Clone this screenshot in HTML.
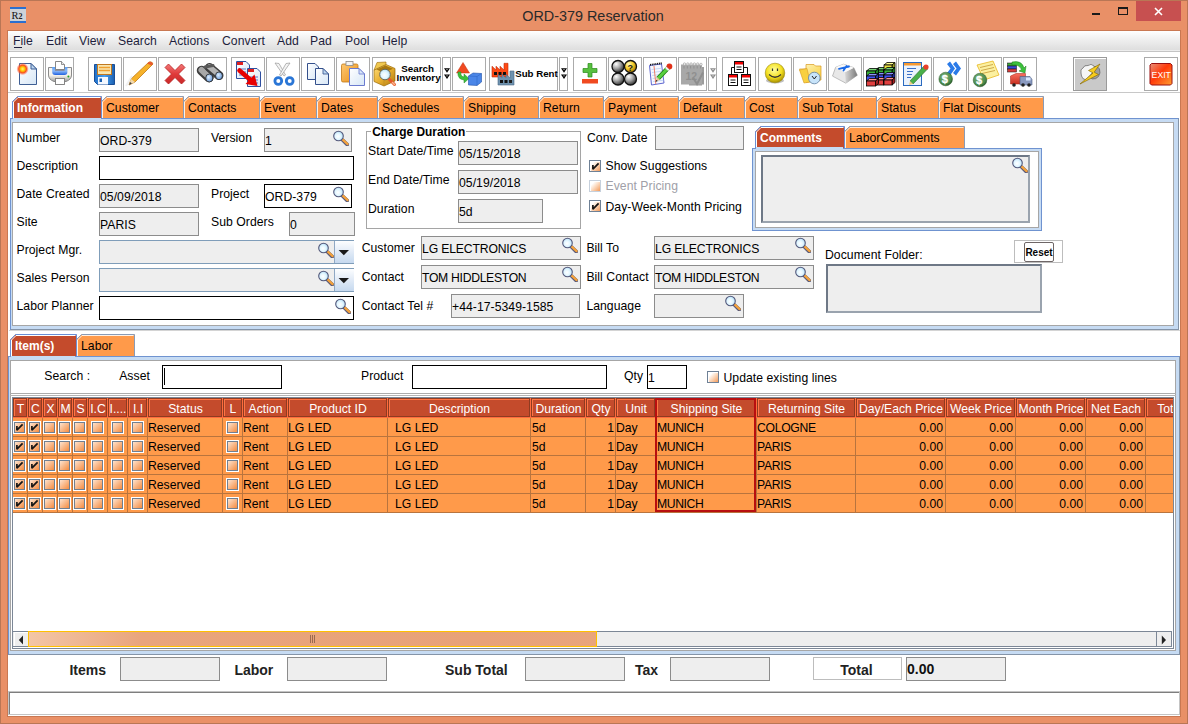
<!DOCTYPE html>
<html><head><meta charset="utf-8"><title>ORD-379 Reservation</title>
<style>
html,body{margin:0;padding:0;}
body{width:1188px;height:724px;position:relative;overflow:hidden;font-family:"Liberation Sans", sans-serif;background:#E99067}
body div, body svg{position:absolute}
.t{white-space:nowrap}
</style></head><body>
<svg width="0" height="0" style="left:0;top:0">
<defs>
<radialGradient id="lens" cx="0.45" cy="0.55" r="0.6"><stop offset="0" stop-color="#FFFFFF"/><stop offset="0.5" stop-color="#E2F6FF"/><stop offset="1" stop-color="#A8D8F4"/></radialGradient>
<symbol id="mag" viewBox="0 0 17 16">
<path d="M10.3 9.8 L15.3 14.6" stroke="#5A5A78" stroke-width="3.6" stroke-linecap="round"/>
<path d="M10.8 9.6 L15.6 14.1" stroke="#F5A23A" stroke-width="2.2" stroke-linecap="round"/>
<circle cx="6.5" cy="6" r="4.8" fill="url(#lens)" stroke="#54587A" stroke-width="1.1"/>
</symbol>
</defs></svg>
<div style="left:0;top:0;width:1188px;height:724px;background:#E99067;box-shadow:inset 0 0 0 1px #B97655"></div>
<div style="left:7px;top:30px;width:1174px;height:687px;background:#C97852"></div>
<div style="left:8px;top:31px;width:1172px;height:685px;background:#fff"></div>
<div class="t" style="left:-1.00px;top:7.97px;font-size:14.4px;line-height:16.08px;color:#2A2A2A;width:1188px;text-align:center;">ORD-379 Reservation</div>
<svg style="left:10px;top:7px" width="16" height="16" viewBox="0 0 16 16">
<rect x="0" y="0" width="16" height="16" fill="#CDD2D8"/>
<rect x="0" y="0" width="16" height="2" fill="#2A6FD0"/><rect x="0" y="14" width="16" height="2" fill="#2A6FD0"/>
<text x="1.6" y="11.8" font-family="Liberation Serif" font-size="10.5" fill="#111">R</text>
<text x="8.6" y="11.5" font-family="Liberation Serif" font-weight="bold" font-size="8" fill="#222">2</text>
</svg>
<div style="left:1136px;top:1px;width:45px;height:20px;background:#C75050"></div>
<svg style="left:1150px;top:4px" width="18" height="14" viewBox="0 0 18 14">
<path d="M5 4 L12 11 M12 4 L5 11" stroke="#fff" stroke-width="1.6"/></svg>
<div style="left:1118px;top:7px;width:10px;height:8px;box-sizing:border-box;border:1px solid #1A1A1A;border-top-width:2px"></div>
<div style="left:1092px;top:13px;width:8px;height:2px;background:#1A1A1A"></div>
<div style="left:8px;top:31px;width:1172px;height:19px;background:linear-gradient(#FFFFFF,#F4F4F4 30%,#DEDEDE)"></div>
<div style="left:8px;top:50px;width:1172px;height:1px;background:#EDEDED"></div>
<div style="left:8px;top:51px;width:1172px;height:1px;background:#C4C4C4"></div>
<div class="t" style="left:13.00px;top:35.46px;font-size:12.2px;line-height:13.63px;color:#1E1E3C;letter-spacing:0.05px;">File</div>
<div class="t" style="left:46.00px;top:35.46px;font-size:12.2px;line-height:13.63px;color:#1E1E3C;letter-spacing:0.05px;">Edit</div>
<div class="t" style="left:79.00px;top:35.46px;font-size:12.2px;line-height:13.63px;color:#1E1E3C;letter-spacing:0.05px;">View</div>
<div class="t" style="left:118.00px;top:35.46px;font-size:12.2px;line-height:13.63px;color:#1E1E3C;letter-spacing:0.05px;">Search</div>
<div class="t" style="left:169.00px;top:35.46px;font-size:12.2px;line-height:13.63px;color:#1E1E3C;letter-spacing:0.05px;">Actions</div>
<div class="t" style="left:222.00px;top:35.46px;font-size:12.2px;line-height:13.63px;color:#1E1E3C;letter-spacing:0.05px;">Convert</div>
<div class="t" style="left:277.00px;top:35.46px;font-size:12.2px;line-height:13.63px;color:#1E1E3C;letter-spacing:0.05px;">Add</div>
<div class="t" style="left:310.00px;top:35.46px;font-size:12.2px;line-height:13.63px;color:#1E1E3C;letter-spacing:0.05px;">Pad</div>
<div class="t" style="left:345.00px;top:35.46px;font-size:12.2px;line-height:13.63px;color:#1E1E3C;letter-spacing:0.05px;">Pool</div>
<div class="t" style="left:382.00px;top:35.46px;font-size:12.2px;line-height:13.63px;color:#1E1E3C;letter-spacing:0.05px;">Help</div>
<div style="left:14px;top:47px;width:8px;height:1px;background:#1E1E3C"></div>
<div style="left:10px;top:57px;width:34px;height:34px;box-sizing:border-box;border:1px solid #ABABAB;background:#fff"></div>
<div style="left:45px;top:57px;width:29px;height:34px;box-sizing:border-box;border:1px solid #ABABAB;background:#fff"></div>
<div style="left:88px;top:57px;width:34px;height:34px;box-sizing:border-box;border:1px solid #ABABAB;background:#fff"></div>
<div style="left:123px;top:57px;width:34px;height:34px;box-sizing:border-box;border:1px solid #ABABAB;background:#fff"></div>
<div style="left:158px;top:57px;width:34px;height:34px;box-sizing:border-box;border:1px solid #ABABAB;background:#fff"></div>
<div style="left:193px;top:57px;width:34px;height:34px;box-sizing:border-box;border:1px solid #ABABAB;background:#fff"></div>
<div style="left:231px;top:57px;width:34px;height:34px;box-sizing:border-box;border:1px solid #ABABAB;background:#fff"></div>
<div style="left:266px;top:57px;width:34px;height:34px;box-sizing:border-box;border:1px solid #ABABAB;background:#fff"></div>
<div style="left:301px;top:57px;width:34px;height:34px;box-sizing:border-box;border:1px solid #ABABAB;background:#fff"></div>
<div style="left:336px;top:57px;width:34px;height:34px;box-sizing:border-box;border:1px solid #ABABAB;background:#fff"></div>
<div style="left:372px;top:57px;width:69px;height:34px;box-sizing:border-box;border:1px solid #ABABAB;background:#fff"></div>
<div style="left:442px;top:57px;width:9px;height:34px;box-sizing:border-box;border:1px solid #ABABAB;background:#fff"></div>
<div style="left:452px;top:57px;width:34px;height:34px;box-sizing:border-box;border:1px solid #ABABAB;background:#fff"></div>
<div style="left:489px;top:57px;width:69px;height:34px;box-sizing:border-box;border:1px solid #ABABAB;background:#fff"></div>
<div style="left:559px;top:57px;width:9px;height:34px;box-sizing:border-box;border:1px solid #ABABAB;background:#fff"></div>
<div style="left:573px;top:57px;width:34px;height:34px;box-sizing:border-box;border:1px solid #ABABAB;background:#fff"></div>
<div style="left:608px;top:57px;width:34px;height:34px;box-sizing:border-box;border:1px solid #ABABAB;background:#fff"></div>
<div style="left:643px;top:57px;width:34px;height:34px;box-sizing:border-box;border:1px solid #ABABAB;background:#fff"></div>
<div style="left:678px;top:57px;width:29px;height:34px;box-sizing:border-box;border:1px solid #ABABAB;background:#fff"></div>
<div style="left:708px;top:57px;width:9px;height:34px;box-sizing:border-box;border:1px solid #ABABAB;background:#fff"></div>
<div style="left:722px;top:57px;width:34px;height:34px;box-sizing:border-box;border:1px solid #ABABAB;background:#fff"></div>
<div style="left:758px;top:57px;width:34px;height:34px;box-sizing:border-box;border:1px solid #ABABAB;background:#fff"></div>
<div style="left:793px;top:57px;width:34px;height:34px;box-sizing:border-box;border:1px solid #ABABAB;background:#fff"></div>
<div style="left:828px;top:57px;width:34px;height:34px;box-sizing:border-box;border:1px solid #ABABAB;background:#fff"></div>
<div style="left:863px;top:57px;width:34px;height:34px;box-sizing:border-box;border:1px solid #ABABAB;background:#fff"></div>
<div style="left:898px;top:57px;width:34px;height:34px;box-sizing:border-box;border:1px solid #ABABAB;background:#fff"></div>
<div style="left:933px;top:57px;width:34px;height:34px;box-sizing:border-box;border:1px solid #ABABAB;background:#fff"></div>
<div style="left:968px;top:57px;width:34px;height:34px;box-sizing:border-box;border:1px solid #ABABAB;background:#fff"></div>
<div style="left:1003px;top:57px;width:34px;height:34px;box-sizing:border-box;border:1px solid #ABABAB;background:#fff"></div>
<div style="left:1144px;top:57px;width:34px;height:34px;box-sizing:border-box;border:1px solid #ABABAB;background:#fff"></div>
<div style="left:1073px;top:57px;width:34px;height:34px;box-sizing:border-box;border:1px solid #9A9A9A;background:#C9C9C9;box-shadow:inset 1px 1px 0 #fff"></div>
<div style="left:8px;top:92px;width:1172px;height:1px;background:#C8C8C8"></div>

<svg style="left:0;top:0" width="1188" height="95" viewBox="0 0 1188 95">
<defs>
<linearGradient id="pg" x1="0" y1="0" x2="1" y2="1"><stop offset="0" stop-color="#FFFFFF"/><stop offset="1" stop-color="#D6E6F6"/></linearGradient>
<radialGradient id="sun" cx="0.5" cy="0.5" r="0.5"><stop offset="0" stop-color="#FFF27A"/><stop offset="0.35" stop-color="#FFC800"/><stop offset="0.62" stop-color="#F8501E"/><stop offset="1" stop-color="#FF6040" stop-opacity="0"/></radialGradient>
<linearGradient id="prn" x1="0" y1="0" x2="0" y2="1"><stop offset="0" stop-color="#F4F4F4"/><stop offset="0.55" stop-color="#F8F4EC"/><stop offset="1" stop-color="#A0A0A0"/></linearGradient>
<linearGradient id="tray" x1="0" y1="0" x2="0" y2="1"><stop offset="0" stop-color="#5AA0F8"/><stop offset="0.5" stop-color="#8AB8F8"/><stop offset="1" stop-color="#2060E0"/></linearGradient>
<linearGradient id="flop" x1="0" y1="0" x2="1" y2="0"><stop offset="0" stop-color="#1F6FC8"/><stop offset="0.5" stop-color="#4AA0F0"/><stop offset="1" stop-color="#1A5FB0"/></linearGradient>
<linearGradient id="redx" x1="0" y1="0" x2="0" y2="1"><stop offset="0" stop-color="#F27A7A"/><stop offset="0.5" stop-color="#E03A3A"/><stop offset="1" stop-color="#C82828"/></linearGradient>
<linearGradient id="binb" x1="0" y1="0" x2="0" y2="1"><stop offset="0" stop-color="#9A9A9A"/><stop offset="0.5" stop-color="#5A5A5A"/><stop offset="1" stop-color="#3A3A3A"/></linearGradient>
<radialGradient id="bl" cx="0.4" cy="0.4" r="0.6"><stop offset="0" stop-color="#E0F0FF"/><stop offset="1" stop-color="#6A9AD8"/></radialGradient>
<linearGradient id="clip" x1="0" y1="0" x2="1" y2="1"><stop offset="0" stop-color="#FFC870"/><stop offset="1" stop-color="#E8901A"/></linearGradient>
<linearGradient id="gold" x1="0" y1="0" x2="1" y2="1"><stop offset="0" stop-color="#FFE080"/><stop offset="0.5" stop-color="#E8B030"/><stop offset="1" stop-color="#B07810"/></linearGradient>
<radialGradient id="ball" cx="0.35" cy="0.3" r="0.7"><stop offset="0" stop-color="#FFFFFF"/><stop offset="0.5" stop-color="#A8A8A8"/><stop offset="1" stop-color="#3A3A3A"/></radialGradient>
<radialGradient id="yball" cx="0.35" cy="0.3" r="0.7"><stop offset="0" stop-color="#FFFBC0"/><stop offset="0.5" stop-color="#F8D030"/><stop offset="1" stop-color="#B08000"/></radialGradient>
<radialGradient id="smile" cx="0.45" cy="0.35" r="0.65"><stop offset="0" stop-color="#FFFFA0"/><stop offset="0.6" stop-color="#F4E020"/><stop offset="1" stop-color="#A89000"/></radialGradient>
<linearGradient id="fold" x1="0" y1="0" x2="1" y2="1"><stop offset="0" stop-color="#FFF8C8"/><stop offset="1" stop-color="#F8CC30"/></linearGradient>
<linearGradient id="key" x1="0" y1="0" x2="0" y2="1"><stop offset="0" stop-color="#FFFFFF"/><stop offset="0.6" stop-color="#D8D8D8"/><stop offset="1" stop-color="#8A8A8A"/></linearGradient>
<radialGradient id="coin" cx="0.4" cy="0.35" r="0.65"><stop offset="0" stop-color="#7AB07A"/><stop offset="0.8" stop-color="#4A8A4A"/><stop offset="1" stop-color="#2E5E2E"/></radialGradient>
<linearGradient id="exitg" x1="0" y1="0" x2="1" y2="1"><stop offset="0" stop-color="#E8907A"/><stop offset="0.45" stop-color="#FF3A0A"/><stop offset="1" stop-color="#FFA030"/></linearGradient>
<linearGradient id="keyr" x1="0" y1="0" x2="1" y2="0"><stop offset="0" stop-color="#D8D8D8"/><stop offset="1" stop-color="#7A7A7A"/></linearGradient>
<linearGradient id="truck" x1="0" y1="0" x2="0" y2="1"><stop offset="0" stop-color="#F87060"/><stop offset="1" stop-color="#C83020"/></linearGradient>
</defs>

<!-- 1 new doc -->
<path d="M19.5 63.5 H31 L36.5 69 V84.5 H19.5 Z" fill="url(#pg)" stroke="#3F5F94" stroke-width="1"/>
<path d="M31 63.5 V69 H36.5 Z" fill="#BCD6F0" stroke="#3F5F94" stroke-width="1"/>
<circle cx="22.6" cy="69" r="6.2" fill="url(#sun)"/>

<!-- 2 printer -->
<path d="M48.5 67.5 H71.5 V75 Q71.5 79.5 66 81.5 H54 Q48.5 79.5 48.5 75 Z" fill="url(#prn)" stroke="#7E7E7E" stroke-width="0.9"/>
<path d="M52.2 67 H67.4 V72 Q67.4 75 64.4 75 H55.2 Q52.2 75 52.2 72 Z" fill="url(#tray)"/>
<rect x="55" y="69.3" width="9.6" height="1.6" fill="#8C8C9C"/>
<path d="M55.5 61.5 H61.5 L64.5 64.5 V69.5 H55.5 Z" fill="#fff" stroke="#7A7A7A" stroke-width="0.9"/>
<path d="M61.5 61.5 V64.5 H64.5" fill="#E8E8E8" stroke="#7A7A7A" stroke-width="0.8"/>
<rect x="55.5" y="78.5" width="9" height="6" fill="#fff" stroke="#7A7A7A" stroke-width="0.9"/>
<circle cx="68.4" cy="76.4" r="1" fill="#20A020"/>

<!-- 3 floppy -->
<path d="M94.5 64.5 H114.5 V84.5 H97.5 L94.5 81.5 Z" fill="url(#flop)" stroke="#1A4E96" stroke-width="1"/>
<rect x="97.5" y="64.5" width="14" height="10" fill="#F8E6B0" stroke="#C07820" stroke-width="1"/>
<path d="M99 67.5 H110 M99 70.5 H110" stroke="#F0A030" stroke-width="1.6"/>
<rect x="98" y="77" width="10" height="7.5" fill="#F4F8FF"/>
<rect x="99.5" y="78.5" width="2.5" height="3.5" fill="#1A5FB0"/>

<!-- 4 pencil -->
<path d="M129 85 L131 79 L149 62 Q152 61 153 64 L135 82 Z" fill="#F6B22A" stroke="#C07812" stroke-width="0.8"/>
<path d="M129 85 L131 79 L135 82 Z" fill="#F0D8B0"/>
<path d="M129 85 L130 82 L132 83.5 Z" fill="#444"/>
<path d="M147 63.5 L149 62 Q152 61 153 64 L151.5 65.5 Z" fill="#E85A30"/>
<path d="M126 86 L132 76" stroke="#E8E8E8" stroke-width="2" opacity="0.6"/>

<!-- 5 red X -->
<path d="M165 67.5 L168.5 64 L175 70.5 L181.5 64 L185 67.5 L178.5 74 L185 80.5 L181.5 84 L175 77.5 L168.5 84 L165 80.5 L171.5 74 Z" fill="url(#redx)" stroke="#B82020" stroke-width="0.8"/>

<!-- 6 binoculars -->
<path d="M201.5 70.5 L209 77.5" stroke="#3E3E3E" stroke-width="9.5" stroke-linecap="round"/>
<path d="M201.5 70 L208.5 76.5" stroke="#A8A8A8" stroke-width="6" stroke-linecap="round"/>
<path d="M209.5 67.5 L219 75.5" stroke="#3E3E3E" stroke-width="9" stroke-linecap="round"/>
<path d="M209.5 67 L218.5 74.5" stroke="#B4B4B4" stroke-width="5.5" stroke-linecap="round"/>
<path d="M205 67 L213 65.5" stroke="#5A5A5A" stroke-width="3" stroke-linecap="round"/>
<ellipse cx="209.3" cy="78" rx="3.6" ry="4" fill="url(#bl)" stroke="#2E2E2E" stroke-width="0.9"/>
<ellipse cx="219" cy="75.8" rx="3.5" ry="3.9" fill="url(#bl)" stroke="#2E2E2E" stroke-width="0.9"/>

<!-- 7 copy red -->
<path d="M236.5 61.5 H246 L249.5 65 V78.5 H236.5 Z" fill="url(#pg)" stroke="#2F4F9F" stroke-width="1"/>
<rect x="237" y="62" width="6" height="3" fill="#E02020"/>
<path d="M239 69 H246 M239 72 H246 M239 75 H246" stroke="#4A6ABF" stroke-width="0.9"/>
<path d="M247.5 68.5 H257 L260.5 72 V86.5 H247.5 Z" fill="url(#pg)" stroke="#2F4F9F" stroke-width="1"/>
<rect x="248" y="69" width="6" height="3" fill="#E02020"/>
<path d="M250 77 H258 M250 80 H258 M250 83 H258" stroke="#4A6ABF" stroke-width="0.9"/>
<path d="M239.5 70.5 L250 79.5" stroke="#E80000" stroke-width="4.6" stroke-linecap="round"/>
<path d="M245.5 84 L257.5 86 L254.5 74.5 Z" fill="#E80000"/>

<!-- 8 scissors -->
<path d="M275 63 L284 76 L285.5 75 L279 63.5 Z" fill="#F4F4F4" stroke="#9A9A9A" stroke-width="0.7"/>
<path d="M290 63 L281 76 L279.5 75 L286 63.5 Z" fill="#F4F4F4" stroke="#9A9A9A" stroke-width="0.7"/>
<circle cx="278.3" cy="81" r="3.4" fill="none" stroke="#2A76D6" stroke-width="2.8"/>
<circle cx="289.7" cy="81" r="3.4" fill="none" stroke="#2A76D6" stroke-width="2.8"/>

<!-- 9 copy -->
<path d="M307.5 63.5 H315 L318.5 67 V79.5 H307.5 Z" fill="url(#pg)" stroke="#34508C" stroke-width="1"/>
<path d="M315.5 68.5 H323 L328.5 74 V84.5 H315.5 Z" fill="url(#pg)" stroke="#34508C" stroke-width="1"/>
<path d="M323 68.5 V74 H328.5 Z" fill="#BCD6F0" stroke="#34508C" stroke-width="0.8"/>

<!-- 10 paste -->
<rect x="341.5" y="64" width="16.5" height="18" rx="1.5" fill="url(#clip)" stroke="#C07818" stroke-width="0.8"/>
<rect x="346" y="61.5" width="7" height="4" fill="#F4F4F4" stroke="#8A8A8A" stroke-width="0.8"/>
<path d="M349.5 68.5 H359 L364.5 74 V85.5 H349.5 Z" fill="url(#pg)" stroke="#6A7ACF" stroke-width="1"/>
<path d="M359 68.5 V74 H364.5 Z" fill="#D8E6F8" stroke="#6A7ACF" stroke-width="0.8"/>

<!-- 11 search inventory -->
<path d="M374 70 L386 64.5 L395 68.5 L395 81 L384 86 L374 81.5 Z" fill="url(#gold)" stroke="#9A6A08" stroke-width="0.7"/>
<path d="M376.5 69.5 L385.5 65.5 L393 68.8 L384 72.8 Z" fill="#A87810"/>
<path d="M374 70 L377 62.5 L386 62 L386 64.5 Z" fill="#F0C850" stroke="#9A6A08" stroke-width="0.6"/>
<path d="M384 72.8 V86" stroke="#B88A20" stroke-width="0.6"/>
<path d="M389 79 L394.5 84.5" stroke="#E8582A" stroke-width="3" stroke-linecap="round"/>
<path d="M392.5 82.5 L394.5 84.5" stroke="#F8B890" stroke-width="1.5" stroke-linecap="round"/>
<circle cx="385" cy="74.5" r="5.3" fill="url(#lens)" stroke="#6A6A5A" stroke-width="1"/>

<!-- dropdown triangles -->
<g id="dd">
<path d="M444 68.2 H450 L447 72.8 Z" fill="#000"/><circle cx="447" cy="69.6" r="0.6" fill="#fff"/>
<path d="M444 74.4 H450 L447 79 Z" fill="#000"/><circle cx="447" cy="75.8" r="0.6" fill="#fff"/>
</g>
<use href="#dd" x="117" y="0"/>
<g opacity="0.45"><use href="#dd" x="266" y="0"/></g>

<!-- 12 shapes -->
<path d="M463 62.5 L469.5 73 H456.5 Z" fill="#F04A20" stroke="#C03010" stroke-width="0.5"/>
<path d="M458 72 Q457 79 464 80 L464 83 L469 78.5 L464 74 L464 77 Q460 76 461 72 Z" fill="#3CC03C" stroke="#2A8A2A" stroke-width="0.5"/>
<path d="M468.5 76 L473 73 L481.5 73.5 L481.5 82 L477 85.5 L468.5 85 Z" fill="#4A86E8" stroke="#2050A8" stroke-width="0.6"/>
<path d="M468.5 76 L477 76.5 L481.5 73.5 M477 76.5 V85.5" stroke="#2A60C0" stroke-width="0.5" fill="none"/>

<!-- 13 sub rent factories -->
<path d="M492 77 V66.2 L496 70 V66.2 L500 70 V66.2 L504 70 V63.3 H508 V77 Z" fill="#FF4A14" stroke="#C02A08" stroke-width="0.6"/>
<rect x="494" y="72" width="3" height="3" fill="#111"/><rect x="498.5" y="72" width="3" height="3" fill="#111"/><rect x="503" y="72" width="3" height="3" fill="#111"/>
<path d="M498 85 V74.4 L502 78 V74.4 L506 78 V74.4 L510 78 V71 H514 V85 Z" fill="#6E92AE" stroke="#4A6A86" stroke-width="0.6"/>
<rect x="500" y="80" width="3" height="3" fill="#111"/><rect x="504.5" y="80" width="3" height="3" fill="#111"/><rect x="509" y="80" width="3" height="3" fill="#222"/>

<!-- 14 plus minus -->
<path d="M588 63.5 H592 V68.5 H597 V72.5 H592 V77 H588 V72.5 H583 V68.5 H588 Z" fill="#58C040" stroke="#2A8A1A" stroke-width="0.7"/>
<rect x="582" y="79" width="16" height="4.5" fill="#F04A20"/>

<!-- 15 balls -->
<circle cx="618" cy="66.5" r="6" fill="url(#ball)" stroke="#111" stroke-width="1.3"/>
<circle cx="630.5" cy="66.5" r="6" fill="url(#yball)" stroke="#111" stroke-width="1.3"/>
<text x="627.5" y="70.5" font-family="Liberation Sans" font-weight="bold" font-size="9" fill="#222">?</text>
<circle cx="618" cy="79" r="6" fill="url(#ball)" stroke="#111" stroke-width="1.3"/>
<circle cx="630.5" cy="79" r="6" fill="url(#ball)" stroke="#111" stroke-width="1.3"/>

<!-- 16 notepad green pencil -->
<path d="M649.5 65.5 L661.5 64 L664 83 L651.5 85 Z" fill="#F6F8FF" stroke="#6068D0" stroke-width="1"/>
<path d="M651.5 69.5 L662 68.2 M652 72.5 L662.4 71.2 M652.3 75.5 L662.8 74.2 M652.7 78.5 L663.2 77.2 M653 81.5 L663.6 80.2" stroke="#B8D0F4" stroke-width="0.8"/>
<path d="M654 66 L655.8 84" stroke="#F06040" stroke-width="0.8"/>
<path d="M650 64.8 L662 63.2" stroke="#111" stroke-width="1.8" stroke-dasharray="1 0.8"/>
<path d="M658 78.5 L668.5 67.5" stroke="#1E7A10" stroke-width="4.6" stroke-linecap="butt"/>
<path d="M658 78.5 L668.5 67.5" stroke="#58D040" stroke-width="3" stroke-linecap="butt"/>
<path d="M656 81.5 L657 77 L660 80 Z" fill="#E8C890"/>
<path d="M655.5 82 L656.3 79.8 L657.8 81 Z" fill="#333"/>
<circle cx="669.4" cy="66.4" r="2.9" fill="#E03018"/>
<path d="M666.6 69.4 L667.9 68" stroke="#F0F0F0" stroke-width="4.4"/>

<!-- 17 calendar gray -->
<rect x="692" y="67" width="12" height="17.5" fill="#9C9C9C"/>
<rect x="689" y="82" width="13" height="3.5" fill="#9A9A9A"/>
<rect x="681" y="64.5" width="21" height="20" fill="#A8A8A8"/>
<g fill="#F2F2F2" stroke="#9A9A9A" stroke-width="0.6">
<circle cx="684.5" cy="64" r="1.2"/><circle cx="687.8" cy="64" r="1.2"/><circle cx="691.1" cy="64" r="1.2"/><circle cx="694.4" cy="64" r="1.2"/><circle cx="697.7" cy="64" r="1.2"/><circle cx="701" cy="64.4" r="1.2"/>
</g>
<path d="M684 66 v2.5 M687.3 66 v2.5 M690.6 66 v2.5 M693.9 66 v2.5 M697.2 66 v2.5 M700.5 66 v2.5" stroke="#8A8A8A" stroke-width="0.8"/>
<text x="685.5" y="79.5" font-family="Liberation Sans" font-weight="bold" font-size="10.5" fill="#909090">12</text>
<path d="M693 77.5 L697 84 L703 72.5" stroke="#8E8E8E" stroke-width="2" fill="none"/>

<!-- 18 org chart -->
<g stroke="#111" stroke-width="1" fill="#fff">
<path d="M731.5 74 V67.5 H747.5 V74" fill="none"/>
<rect x="734.5" y="61.5" width="9" height="11"/>
<rect x="728.5" y="74.5" width="9" height="11"/>
<rect x="741.5" y="74.5" width="9" height="11"/>
</g>
<rect x="735" y="62" width="8" height="2.5" fill="#F00000"/>
<rect x="729" y="75" width="8" height="2.5" fill="#F00000"/>
<rect x="742" y="75" width="8" height="2.5" fill="#F00000"/>
<path d="M736.5 67 H741.5 M736.5 69.5 H741.5 M730.5 80 H735.5 M730.5 82.5 H735.5 M743.5 80 H748.5 M743.5 82.5 H748.5" stroke="#111" stroke-width="1"/>

<!-- 19 smiley -->
<ellipse cx="775" cy="80.5" rx="9" ry="3" fill="#000" opacity="0.25"/>
<circle cx="775" cy="73" r="9.8" fill="url(#smile)" stroke="#9A8A10" stroke-width="0.6"/>
<path d="M772.5 68.5 v2.5 M777.5 68.5 v2.5" stroke="#333" stroke-width="1.2"/>
<path d="M769 74.5 Q775 80 781 74.5" stroke="#333" stroke-width="1.2" fill="none"/>

<!-- 20 folder clock -->
<path d="M801 72 L799.5 69 H806 L806 64.5 H814 L815.5 66 H821 V80 L806 82.5 Z" fill="url(#fold)" stroke="#D89A20" stroke-width="0.7"/>
<path d="M799.5 70 L807 68.5 L810 82 L804 83 Z" fill="#F8D040" stroke="#D89A20" stroke-width="0.6"/>
<circle cx="814.3" cy="78" r="5.8" fill="#C8E4FA" stroke="#6A8AAA" stroke-width="0.9"/>
<path d="M812 76 L814.3 79 L816.5 76" stroke="#222" stroke-width="1" fill="none"/>

<!-- 21 key -->
<path d="M835.6 67.3 L843.6 64.2 L853.8 67.7 L857.3 75.3 L845.8 83.2 L832.5 76.1 Z" fill="#E8E8E8" stroke="#9A9A9A" stroke-width="0.6"/>
<path d="M845 72.2 L853.8 67.7 L857.3 75.3 L845.8 83.2 Z" fill="url(#keyr)"/>
<path d="M835.6 67.3 L843.6 64.2 L853.8 67.7 L845 72.2 Z" fill="#FAFAFA"/>
<path d="M839 68.8 L849 66.5 M846.5 66 L843.5 70.5" stroke="#1A6AE8" stroke-width="1.8" fill="none" stroke-linecap="round"/>

<!-- 22 blocks -->
<path d="M875.5 70 L878.5 67.5 L886.5 67.5 L883.5 70 Z" fill="#7AD87A" stroke="#000" stroke-width="0.8"/><path d="M883.5 70 L886.5 67.5 L886.5 72.5 L883.5 75 Z" fill="#208020" stroke="#000" stroke-width="0.8"/><rect x="875.5" y="70" width="8" height="5" fill="#38B038" stroke="#000" stroke-width="0.8"/>
<path d="M875.5 75 L878.5 72.5 L886.5 72.5 L883.5 75 Z" fill="#8A90FF" stroke="#000" stroke-width="0.8"/><path d="M883.5 75 L886.5 72.5 L886.5 77.5 L883.5 80 Z" fill="#2030A0" stroke="#000" stroke-width="0.8"/><rect x="875.5" y="75" width="8" height="5" fill="#4050F0" stroke="#000" stroke-width="0.8"/>
<path d="M875.5 80 L878.5 77.5 L886.5 77.5 L883.5 80 Z" fill="#FF9090" stroke="#000" stroke-width="0.8"/><path d="M883.5 80 L886.5 77.5 L886.5 82.5 L883.5 85 Z" fill="#A02020" stroke="#000" stroke-width="0.8"/><rect x="875.5" y="80" width="8" height="5" fill="#E04040" stroke="#000" stroke-width="0.8"/>
<path d="M866.5 71 L869.5 68.5 L878.5 68.5 L875.5 71 Z" fill="#7AD87A" stroke="#000" stroke-width="0.8"/><path d="M875.5 71 L878.5 68.5 L878.5 73.5 L875.5 76 Z" fill="#208020" stroke="#000" stroke-width="0.8"/><rect x="866.5" y="71" width="9" height="5" fill="#38B038" stroke="#000" stroke-width="0.8"/>
<path d="M866.5 76 L869.5 73.5 L878.5 73.5 L875.5 76 Z" fill="#8A90FF" stroke="#000" stroke-width="0.8"/><path d="M875.5 76 L878.5 73.5 L878.5 78.5 L875.5 81 Z" fill="#2030A0" stroke="#000" stroke-width="0.8"/><rect x="866.5" y="76" width="9" height="5" fill="#4050F0" stroke="#000" stroke-width="0.8"/>
<path d="M866.5 81 L869.5 78.5 L878.5 78.5 L875.5 81 Z" fill="#FF9090" stroke="#000" stroke-width="0.8"/><path d="M875.5 81 L878.5 78.5 L878.5 83.5 L875.5 86 Z" fill="#A02020" stroke="#000" stroke-width="0.8"/><rect x="866.5" y="81" width="9" height="5" fill="#E04040" stroke="#000" stroke-width="0.8"/>
<path d="M884 65 L887 62.5 L895 62.5 L892 65 Z" fill="#FFFF90" stroke="#000" stroke-width="0.8"/><path d="M892 65 L895 62.5 L895 67.5 L892 70 Z" fill="#A0A020" stroke="#000" stroke-width="0.8"/><rect x="884" y="65" width="8" height="5" fill="#E8E040" stroke="#000" stroke-width="0.8"/>
<path d="M884 70 L887 67.5 L895 67.5 L892 70 Z" fill="#7AD87A" stroke="#000" stroke-width="0.8"/><path d="M892 70 L895 67.5 L895 72.5 L892 75 Z" fill="#208020" stroke="#000" stroke-width="0.8"/><rect x="884" y="70" width="8" height="5" fill="#38B038" stroke="#000" stroke-width="0.8"/>
<path d="M884 75 L887 72.5 L895 72.5 L892 75 Z" fill="#8A90FF" stroke="#000" stroke-width="0.8"/><path d="M892 75 L895 72.5 L895 77.5 L892 80 Z" fill="#2030A0" stroke="#000" stroke-width="0.8"/><rect x="884" y="75" width="8" height="5" fill="#4050F0" stroke="#000" stroke-width="0.8"/>
<path d="M884 80 L887 77.5 L895 77.5 L892 80 Z" fill="#FF9090" stroke="#000" stroke-width="0.8"/><path d="M892 80 L895 77.5 L895 82.5 L892 85 Z" fill="#A02020" stroke="#000" stroke-width="0.8"/><rect x="884" y="80" width="8" height="5" fill="#E04040" stroke="#000" stroke-width="0.8"/>

<!-- 23 notepad2 -->
<rect x="903.5" y="62.5" width="18" height="23" fill="#EAF2FC" stroke="#2A6AC0" stroke-width="1"/>
<rect x="904" y="63" width="17" height="2.5" fill="#F89A30"/>
<path d="M907 68.5 H916 M907 71.5 H913 M907 74.5 H912 M907 77.5 H911" stroke="#3A70C8" stroke-width="1"/>
<path d="M910 81 L924 66 L927.5 69 L913 84 Z" fill="#4AB04A" stroke="#2A6A2A" stroke-width="0.6"/>
<circle cx="926" cy="67" r="2.6" fill="#E8402A"/>
<path d="M910 81 L909 85 L913 84 Z" fill="#E8D080"/>

<!-- 24 dollar arrow -->
<path d="M947 64 L950 61.5 L955 68.5 L950 75.5 L947 73 L950.5 68.5 Z" fill="#2A7AE8"/>
<path d="M953 64 L956 61.5 L961 68.5 L956 75.5 L953 73 L956.5 68.5 Z" fill="#2A7AE8"/>
<circle cx="945.7" cy="79" r="6.8" fill="url(#coin)" stroke="#2A5A2A" stroke-width="0.5"/>
<text x="941.8" y="83.3" font-family="Liberation Sans" font-weight="bold" font-size="11" fill="#fff" stroke="#fff" stroke-width="0.3">$</text>

<!-- 25 dollar note -->
<path d="M977 65 L993 61 L999 75 L984 80 Z" fill="#FBF0A0" stroke="#E8B820" stroke-width="0.8"/>
<path d="M980 67.5 L993 64.5 M981 70.5 L994 67.5 M982 73.5 L995 70.5" stroke="#C8A040" stroke-width="0.9"/>
<circle cx="980" cy="80" r="6.8" fill="url(#coin)" stroke="#2A5A2A" stroke-width="0.5"/>
<text x="976.1" y="84.3" font-family="Liberation Sans" font-weight="bold" font-size="11" fill="#fff" stroke="#fff" stroke-width="0.3">$</text>

<!-- 26 truck -->
<rect x="1007.5" y="63" width="9" height="3" fill="#3CA83C" stroke="#111" stroke-width="0.5"/>
<rect x="1007.5" y="66" width="9" height="3" fill="#3A4AD8" stroke="#111" stroke-width="0.5"/>
<rect x="1007.5" y="69" width="9" height="3" fill="#D83A3A" stroke="#111" stroke-width="0.5"/>
<path d="M1012 62 Q1022 60 1024 68 L1026 66 L1025 73 L1019 71 L1021.5 69.5 Q1019 64 1012 65 Z" fill="#3CC03C" stroke="#1A7A1A" stroke-width="0.5"/>
<path d="M1010.5 76 L1016 73.5 H1025.5 V84 H1010.5 Z" fill="url(#truck)" stroke="#A02010" stroke-width="0.5"/>
<path d="M1020 76.5 H1030 L1032 79.5 V85 H1020 Z" fill="#8A9AC0" stroke="#4A5A80" stroke-width="0.6"/>
<rect x="1026" y="77.5" width="4.5" height="3" fill="#D8E8FF"/>
<circle cx="1014" cy="85" r="1.8" fill="#222"/><circle cx="1023" cy="85" r="1.8" fill="#222"/><circle cx="1029" cy="85" r="1.8" fill="#222"/>

<!-- 27 lightning -->
<path d="M1093 67.5 Q1097 65 1099.5 69 Q1101 73 1098.5 76.5 Q1096 79.5 1092 79 L1090 77 Z" fill="#9E9E9E" stroke="#555" stroke-width="0.6"/>
<path d="M1081 73 Q1080 69 1083 68 Q1084 65 1088 65.5 Q1091 63 1094 66 Q1096 68 1094 71 L1086 80 Q1082 79 1081.5 76 Z" fill="#F6F6F6" stroke="#444" stroke-width="0.6"/>
<path d="M1100 64 L1088.5 70.5 L1093 73 L1080 84 L1098.5 74.5 L1094.2 72.2 Z" fill="#F6CC1E" stroke="#7A6000" stroke-width="0.6" stroke-linejoin="round"/>

<!-- 28 exit -->
<path d="M1151.5 63.5 H1170.5 L1172 65 V83.5 L1170.5 85 H1151.5 L1150 83.5 V65 Z" fill="url(#exitg)" stroke="#9A1010" stroke-width="1"/>
<text x="1151.6" y="77.8" font-family="Liberation Sans" font-size="9.6" fill="#fff" textLength="19.3" lengthAdjust="spacingAndGlyphs">EXIT</text>
</svg>

<div class="t" style="left:401.30px;top:63.93px;font-size:9.8px;line-height:10.95px;color:#000;font-weight:bold;">Search</div>
<div class="t" style="left:396.50px;top:72.53px;font-size:9.8px;line-height:10.95px;color:#000;font-weight:bold;">Inventory</div>
<div class="t" style="left:515.20px;top:68.82px;font-size:9.7px;line-height:10.83px;color:#000;font-weight:bold;">Sub Rent</div>
<svg style="left:101px;top:96px" width="83" height="22" viewBox="0 0 83 22"><path d="M0.5 22 L0.5 5.5 L5.5 0.5 L82.5 0.5 L82.5 22" fill="#FF9A4A" stroke="#8A9BB5" stroke-width="1"/><path d="M1.5 22 L1.5 6 L6 1.5 L81.5 1.5" fill="none" stroke="#fff" stroke-width="1" opacity="0.85"/></svg>
<div class="t" style="left:106.00px;top:101.96px;font-size:12.2px;line-height:13.63px;color:#000;letter-spacing:0.05px;">Customer</div>
<svg style="left:183px;top:96px" width="77" height="22" viewBox="0 0 77 22"><path d="M0.5 22 L0.5 5.5 L5.5 0.5 L76.5 0.5 L76.5 22" fill="#FF9A4A" stroke="#8A9BB5" stroke-width="1"/><path d="M1.5 22 L1.5 6 L6 1.5 L75.5 1.5" fill="none" stroke="#fff" stroke-width="1" opacity="0.85"/></svg>
<div class="t" style="left:188.00px;top:101.96px;font-size:12.2px;line-height:13.63px;color:#000;letter-spacing:0.05px;">Contacts</div>
<svg style="left:259px;top:96px" width="58" height="22" viewBox="0 0 58 22"><path d="M0.5 22 L0.5 5.5 L5.5 0.5 L57.5 0.5 L57.5 22" fill="#FF9A4A" stroke="#8A9BB5" stroke-width="1"/><path d="M1.5 22 L1.5 6 L6 1.5 L56.5 1.5" fill="none" stroke="#fff" stroke-width="1" opacity="0.85"/></svg>
<div class="t" style="left:264.00px;top:101.96px;font-size:12.2px;line-height:13.63px;color:#000;letter-spacing:0.05px;">Event</div>
<svg style="left:316px;top:96px" width="62" height="22" viewBox="0 0 62 22"><path d="M0.5 22 L0.5 5.5 L5.5 0.5 L61.5 0.5 L61.5 22" fill="#FF9A4A" stroke="#8A9BB5" stroke-width="1"/><path d="M1.5 22 L1.5 6 L6 1.5 L60.5 1.5" fill="none" stroke="#fff" stroke-width="1" opacity="0.85"/></svg>
<div class="t" style="left:321.00px;top:101.96px;font-size:12.2px;line-height:13.63px;color:#000;letter-spacing:0.05px;">Dates</div>
<svg style="left:377px;top:96px" width="87" height="22" viewBox="0 0 87 22"><path d="M0.5 22 L0.5 5.5 L5.5 0.5 L86.5 0.5 L86.5 22" fill="#FF9A4A" stroke="#8A9BB5" stroke-width="1"/><path d="M1.5 22 L1.5 6 L6 1.5 L85.5 1.5" fill="none" stroke="#fff" stroke-width="1" opacity="0.85"/></svg>
<div class="t" style="left:382.00px;top:101.96px;font-size:12.2px;line-height:13.63px;color:#000;letter-spacing:0.05px;">Schedules</div>
<svg style="left:463px;top:96px" width="76" height="22" viewBox="0 0 76 22"><path d="M0.5 22 L0.5 5.5 L5.5 0.5 L75.5 0.5 L75.5 22" fill="#FF9A4A" stroke="#8A9BB5" stroke-width="1"/><path d="M1.5 22 L1.5 6 L6 1.5 L74.5 1.5" fill="none" stroke="#fff" stroke-width="1" opacity="0.85"/></svg>
<div class="t" style="left:468.00px;top:101.96px;font-size:12.2px;line-height:13.63px;color:#000;letter-spacing:0.05px;">Shipping</div>
<svg style="left:538px;top:96px" width="66" height="22" viewBox="0 0 66 22"><path d="M0.5 22 L0.5 5.5 L5.5 0.5 L65.5 0.5 L65.5 22" fill="#FF9A4A" stroke="#8A9BB5" stroke-width="1"/><path d="M1.5 22 L1.5 6 L6 1.5 L64.5 1.5" fill="none" stroke="#fff" stroke-width="1" opacity="0.85"/></svg>
<div class="t" style="left:543.00px;top:101.96px;font-size:12.2px;line-height:13.63px;color:#000;letter-spacing:0.05px;">Return</div>
<svg style="left:603px;top:96px" width="76" height="22" viewBox="0 0 76 22"><path d="M0.5 22 L0.5 5.5 L5.5 0.5 L75.5 0.5 L75.5 22" fill="#FF9A4A" stroke="#8A9BB5" stroke-width="1"/><path d="M1.5 22 L1.5 6 L6 1.5 L74.5 1.5" fill="none" stroke="#fff" stroke-width="1" opacity="0.85"/></svg>
<div class="t" style="left:608.00px;top:101.96px;font-size:12.2px;line-height:13.63px;color:#000;letter-spacing:0.05px;">Payment</div>
<svg style="left:678px;top:96px" width="67" height="22" viewBox="0 0 67 22"><path d="M0.5 22 L0.5 5.5 L5.5 0.5 L66.5 0.5 L66.5 22" fill="#FF9A4A" stroke="#8A9BB5" stroke-width="1"/><path d="M1.5 22 L1.5 6 L6 1.5 L65.5 1.5" fill="none" stroke="#fff" stroke-width="1" opacity="0.85"/></svg>
<div class="t" style="left:683.00px;top:101.96px;font-size:12.2px;line-height:13.63px;color:#000;letter-spacing:0.05px;">Default</div>
<svg style="left:744px;top:96px" width="54" height="22" viewBox="0 0 54 22"><path d="M0.5 22 L0.5 5.5 L5.5 0.5 L53.5 0.5 L53.5 22" fill="#FF9A4A" stroke="#8A9BB5" stroke-width="1"/><path d="M1.5 22 L1.5 6 L6 1.5 L52.5 1.5" fill="none" stroke="#fff" stroke-width="1" opacity="0.85"/></svg>
<div class="t" style="left:749.00px;top:101.96px;font-size:12.2px;line-height:13.63px;color:#000;letter-spacing:0.05px;">Cost</div>
<svg style="left:797px;top:96px" width="80" height="22" viewBox="0 0 80 22"><path d="M0.5 22 L0.5 5.5 L5.5 0.5 L79.5 0.5 L79.5 22" fill="#FF9A4A" stroke="#8A9BB5" stroke-width="1"/><path d="M1.5 22 L1.5 6 L6 1.5 L78.5 1.5" fill="none" stroke="#fff" stroke-width="1" opacity="0.85"/></svg>
<div class="t" style="left:802.00px;top:101.96px;font-size:12.2px;line-height:13.63px;color:#000;letter-spacing:0.05px;">Sub Total</div>
<svg style="left:876px;top:96px" width="63" height="22" viewBox="0 0 63 22"><path d="M0.5 22 L0.5 5.5 L5.5 0.5 L62.5 0.5 L62.5 22" fill="#FF9A4A" stroke="#8A9BB5" stroke-width="1"/><path d="M1.5 22 L1.5 6 L6 1.5 L61.5 1.5" fill="none" stroke="#fff" stroke-width="1" opacity="0.85"/></svg>
<div class="t" style="left:881.00px;top:101.96px;font-size:12.2px;line-height:13.63px;color:#000;letter-spacing:0.05px;">Status</div>
<svg style="left:938px;top:96px" width="106" height="22" viewBox="0 0 106 22"><path d="M0.5 22 L0.5 5.5 L5.5 0.5 L105.5 0.5 L105.5 22" fill="#FF9A4A" stroke="#8A9BB5" stroke-width="1"/><path d="M1.5 22 L1.5 6 L6 1.5 L104.5 1.5" fill="none" stroke="#fff" stroke-width="1" opacity="0.85"/></svg>
<div class="t" style="left:943.00px;top:101.96px;font-size:12.2px;line-height:13.63px;color:#000;letter-spacing:0.05px;">Flat Discounts</div>
<svg style="left:12px;top:96px" width="90" height="22" viewBox="0 0 90 22"><path d="M0.5 22 L0.5 5.5 L5.5 0.5 L89.5 0.5 L89.5 22" fill="#C44B2C" stroke="#6A8FD4" stroke-width="1"/><path d="M1.5 22 L1.5 6 L6 1.5 L88.5 1.5" fill="none" stroke="#fff" stroke-width="1"/></svg>
<div class="t" style="left:17.00px;top:102.14px;font-size:12px;line-height:13.40px;color:#fff;font-weight:bold;">Information</div>
<div style="left:10px;top:118px;width:1169px;height:212px;box-sizing:border-box;border:1px solid #6F93D0;border-right-color:#8494A8;border-bottom-color:#8494A8;background:#C6DBF3"></div>
<div style="left:12px;top:122px;width:1162px;height:204px;box-sizing:border-box;border:1px solid #A6A6A6;background:#fff"></div>
<div style="left:9px;top:330px;width:1171px;height:1px;background:#D4D4D4"></div>
<div style="left:13px;top:118px;width:88px;height:4px;background:#C6DBF3"></div>
<div class="t" style="left:16.50px;top:131.96px;font-size:12.2px;line-height:13.63px;color:#000;letter-spacing:0.05px;">Number</div>
<div style="left:99px;top:128px;width:100px;height:24px;box-sizing:border-box;border:1px solid #8C8C8C;background:#EEEEEE;"></div>
<div class="t" style="left:100.00px;top:134.96px;font-size:12.2px;line-height:13.63px;color:#000;letter-spacing:0.05px;">ORD-379</div>
<div class="t" style="left:211.00px;top:131.96px;font-size:12.2px;line-height:13.63px;color:#000;letter-spacing:0.05px;">Version</div>
<div style="left:264px;top:128px;width:88px;height:24px;box-sizing:border-box;border:1px solid #8C8C8C;background:#EEEEEE;"></div>
<div class="t" style="left:265.00px;top:134.96px;font-size:12.2px;line-height:13.63px;color:#000;letter-spacing:0.05px;">1</div>
<svg style="left:332px;top:130px" width="17" height="16" viewBox="0 0 17 16"><use href="#mag"/></svg>
<div class="t" style="left:16.50px;top:159.96px;font-size:12.2px;line-height:13.63px;color:#000;letter-spacing:0.05px;">Description</div>
<div style="left:99px;top:156px;width:255px;height:24px;box-sizing:border-box;border:1px solid #000;background:#fff;"></div>
<div class="t" style="left:16.50px;top:187.96px;font-size:12.2px;line-height:13.63px;color:#000;letter-spacing:0.05px;">Date Created</div>
<div style="left:99px;top:184px;width:100px;height:24px;box-sizing:border-box;border:1px solid #8C8C8C;background:#EEEEEE;"></div>
<div class="t" style="left:100.00px;top:190.96px;font-size:12.2px;line-height:13.63px;color:#000;letter-spacing:0.05px;">05/09/2018</div>
<div class="t" style="left:211.00px;top:187.96px;font-size:12.2px;line-height:13.63px;color:#000;letter-spacing:0.05px;">Project</div>
<div style="left:264px;top:184px;width:88px;height:24px;box-sizing:border-box;border:1px solid #000;background:#fff;"></div>
<div class="t" style="left:265.00px;top:190.96px;font-size:12.2px;line-height:13.63px;color:#000;letter-spacing:0.05px;">ORD-379</div>
<svg style="left:332px;top:186px" width="17" height="16" viewBox="0 0 17 16"><use href="#mag"/></svg>
<div class="t" style="left:16.50px;top:215.96px;font-size:12.2px;line-height:13.63px;color:#000;letter-spacing:0.05px;">Site</div>
<div style="left:99px;top:212px;width:100px;height:24px;box-sizing:border-box;border:1px solid #8C8C8C;background:#EEEEEE;"></div>
<div class="t" style="left:100.00px;top:218.96px;font-size:12.2px;line-height:13.63px;color:#000;letter-spacing:0.05px;">PARIS</div>
<div class="t" style="left:211.00px;top:215.96px;font-size:12.2px;line-height:13.63px;color:#000;letter-spacing:0.05px;">Sub Orders</div>
<div style="left:289px;top:212px;width:66px;height:24px;box-sizing:border-box;border:1px solid #8C8C8C;background:#EEEEEE;"></div>
<div class="t" style="left:290.00px;top:218.96px;font-size:12.2px;line-height:13.63px;color:#000;letter-spacing:0.05px;">0</div>
<div class="t" style="left:16.50px;top:243.96px;font-size:12.2px;line-height:13.63px;color:#000;letter-spacing:0.05px;">Project Mgr.</div>
<div style="left:99px;top:240px;width:255px;height:24px;box-sizing:border-box;border:1px solid #7F9DB9;background:#EEEEEE;"></div>
<div class="t" style="left:16.50px;top:271.96px;font-size:12.2px;line-height:13.63px;color:#000;letter-spacing:0.05px;">Sales Person</div>
<div style="left:99px;top:268px;width:255px;height:24px;box-sizing:border-box;border:1px solid #7F9DB9;background:#EEEEEE;"></div>
<svg style="left:317px;top:242px" width="17" height="16" viewBox="0 0 17 16"><use href="#mag"/></svg>
<div style="left:334px;top:241px;width:19px;height:22px;background:linear-gradient(#FDFEFF,#E6EEF8 40%,#C6D9EF);border-left:1px solid #8FA8C4"></div>
<svg style="left:338px;top:250px" width="12" height="6" viewBox="0 0 12 6"><path d="M0.6 0 H11 L5.8 5.2 Z" fill="#1A1A1A"/></svg>
<svg style="left:317px;top:270px" width="17" height="16" viewBox="0 0 17 16"><use href="#mag"/></svg>
<div style="left:334px;top:269px;width:19px;height:22px;background:linear-gradient(#FDFEFF,#E6EEF8 40%,#C6D9EF);border-left:1px solid #8FA8C4"></div>
<svg style="left:338px;top:278px" width="12" height="6" viewBox="0 0 12 6"><path d="M0.6 0 H11 L5.8 5.2 Z" fill="#1A1A1A"/></svg>
<div class="t" style="left:16.50px;top:299.96px;font-size:12.2px;line-height:13.63px;color:#000;letter-spacing:0.05px;">Labor Planner</div>
<div style="left:99px;top:296px;width:255px;height:24px;box-sizing:border-box;border:1px solid #000;background:#fff;"></div>
<svg style="left:334px;top:298px" width="17" height="16" viewBox="0 0 17 16"><use href="#mag"/></svg>
<div style="left:366px;top:131px;width:215px;height:98px;box-sizing:border-box;border:1px solid #A5A5A5"></div>
<div style="left:371px;top:125px;width:95px;height:12px;background:#fff"></div>
<div class="t" style="left:372.20px;top:126.23px;font-size:11.9px;line-height:13.29px;color:#000;font-weight:bold;">Charge Duration</div>
<div class="t" style="left:368.00px;top:144.96px;font-size:12.2px;line-height:13.63px;color:#000;letter-spacing:0.05px;">Start Date/Time</div>
<div style="left:458px;top:141px;width:120px;height:24px;box-sizing:border-box;border:1px solid #8C8C8C;background:#EEEEEE;"></div>
<div class="t" style="left:459.00px;top:147.96px;font-size:12.2px;line-height:13.63px;color:#000;letter-spacing:0.05px;">05/15/2018</div>
<div class="t" style="left:368.00px;top:173.96px;font-size:12.2px;line-height:13.63px;color:#000;letter-spacing:0.05px;">End Date/Time</div>
<div style="left:458px;top:170px;width:120px;height:24px;box-sizing:border-box;border:1px solid #8C8C8C;background:#EEEEEE;"></div>
<div class="t" style="left:459.00px;top:176.96px;font-size:12.2px;line-height:13.63px;color:#000;letter-spacing:0.05px;">05/19/2018</div>
<div class="t" style="left:368.00px;top:202.96px;font-size:12.2px;line-height:13.63px;color:#000;letter-spacing:0.05px;">Duration</div>
<div style="left:458px;top:199px;width:85px;height:24px;box-sizing:border-box;border:1px solid #8C8C8C;background:#EEEEEE;"></div>
<div class="t" style="left:459.00px;top:205.96px;font-size:12.2px;line-height:13.63px;color:#000;letter-spacing:0.05px;">5d</div>
<div class="t" style="left:587.00px;top:131.96px;font-size:12.2px;line-height:13.63px;color:#000;letter-spacing:0.05px;">Conv. Date</div>
<div style="left:655px;top:126px;width:89px;height:24px;box-sizing:border-box;border:1px solid #8C8C8C;background:#EEEEEE;"></div>
<div style="left:589px;top:160px;width:12px;height:12px;box-sizing:border-box;border:1px solid #6F8196;background:linear-gradient(135deg,#FFFFFF 25%,#FBD9BE 55%,#F39A5A);box-shadow:inset 1px 1px 0 #fff"></div>
<svg style="left:589px;top:160px" width="13" height="13" viewBox="0 0 13 13"><path d="M3.9 5 V9.2 L9.6 3.3" fill="none" stroke="#151515" stroke-width="1.7" stroke-linejoin="bevel"/></svg>
<div class="t" style="left:605.50px;top:159.96px;font-size:12.2px;line-height:13.63px;color:#000;letter-spacing:0.05px;">Show Suggestions</div>
<div style="left:589px;top:180px;width:12px;height:12px;box-sizing:border-box;border:1px solid #C6D0DC;background:linear-gradient(135deg,#FFFFFF 25%,#FBD9BE 55%,#F39A5A);box-shadow:inset 1px 1px 0 #fff"></div>
<div class="t" style="left:605.50px;top:179.96px;font-size:12.2px;line-height:13.63px;color:#A0A0A8;letter-spacing:0.05px;">Event Pricing</div>
<div style="left:589px;top:200px;width:12px;height:12px;box-sizing:border-box;border:1px solid #6F8196;background:linear-gradient(135deg,#FFFFFF 25%,#FBD9BE 55%,#F39A5A);box-shadow:inset 1px 1px 0 #fff"></div>
<svg style="left:589px;top:200px" width="13" height="13" viewBox="0 0 13 13"><path d="M3.9 5 V9.2 L9.6 3.3" fill="none" stroke="#151515" stroke-width="1.7" stroke-linejoin="bevel"/></svg>
<div class="t" style="left:605.50px;top:200.96px;font-size:12.2px;line-height:13.63px;color:#000;letter-spacing:0.05px;">Day-Week-Month Pricing</div>
<div style="left:752px;top:148px;width:290px;height:83px;box-sizing:border-box;border:1px solid #6F93D0;background:#C6DBF3"></div>
<div style="left:755px;top:151px;width:284px;height:77px;box-sizing:border-box;border:1px solid #A6A6A6;background:#fff"></div>
<svg style="left:844px;top:126px" width="121" height="22" viewBox="0 0 121 22"><path d="M0.5 22 L0.5 5.5 L5.5 0.5 L120.5 0.5 L120.5 22" fill="#FF9A4A" stroke="#8A9BB5" stroke-width="1"/><path d="M1.5 22 L1.5 6 L6 1.5 L119.5 1.5" fill="none" stroke="#fff" stroke-width="1" opacity="0.85"/></svg>
<div class="t" style="left:849.00px;top:131.96px;font-size:12.2px;line-height:13.63px;color:#000;letter-spacing:0.05px;">LaborComments</div>
<svg style="left:755px;top:126px" width="90" height="22" viewBox="0 0 90 22"><path d="M0.5 22 L0.5 5.5 L5.5 0.5 L89.5 0.5 L89.5 22" fill="#C44B2C" stroke="#6A8FD4" stroke-width="1"/><path d="M1.5 22 L1.5 6 L6 1.5 L88.5 1.5" fill="none" stroke="#fff" stroke-width="1"/></svg>
<div class="t" style="left:760.00px;top:132.14px;font-size:12px;line-height:13.40px;color:#fff;font-weight:bold;">Comments</div>
<div style="left:756px;top:147px;width:87px;height:2px;background:#C6DBF3"></div>
<div style="left:761px;top:155px;width:269px;height:68px;box-sizing:border-box;border:2px solid #6E7886;border-right-color:#9AA3AE;border-bottom-color:#9AA3AE;background:#EEEEEE"></div>
<svg style="left:1011px;top:157px" width="17" height="16" viewBox="0 0 17 16"><use href="#mag"/></svg>
<div class="t" style="left:361.70px;top:241.96px;font-size:12.2px;line-height:13.63px;color:#000;letter-spacing:0.05px;">Customer</div>
<div style="left:421px;top:236px;width:160px;height:24px;box-sizing:border-box;border:1px solid #8C8C8C;background:#EEEEEE;"></div>
<div class="t" style="left:422.00px;top:242.96px;font-size:12.2px;line-height:13.63px;color:#000;letter-spacing:-0.15px;">LG ELECTRONICS</div>
<svg style="left:561px;top:237px" width="17" height="16" viewBox="0 0 17 16"><use href="#mag"/></svg>
<div class="t" style="left:361.70px;top:270.96px;font-size:12.2px;line-height:13.63px;color:#000;letter-spacing:0.05px;">Contact</div>
<div style="left:421px;top:265px;width:160px;height:24px;box-sizing:border-box;border:1px solid #8C8C8C;background:#EEEEEE;"></div>
<div class="t" style="left:422.00px;top:271.96px;font-size:12.2px;line-height:13.63px;color:#000;letter-spacing:-0.3px;">TOM HIDDLESTON</div>
<svg style="left:561px;top:266px" width="17" height="16" viewBox="0 0 17 16"><use href="#mag"/></svg>
<div class="t" style="left:361.70px;top:299.96px;font-size:12.2px;line-height:13.63px;color:#000;letter-spacing:0.05px;">Contact Tel #</div>
<div style="left:451px;top:294px;width:129px;height:24px;box-sizing:border-box;border:1px solid #8C8C8C;background:#EEEEEE;"></div>
<div class="t" style="left:452.00px;top:300.96px;font-size:12.2px;line-height:13.63px;color:#000;letter-spacing:0.05px;">+44-17-5349-1585</div>
<div class="t" style="left:586.40px;top:241.96px;font-size:12.2px;line-height:13.63px;color:#000;letter-spacing:0.05px;">Bill To</div>
<div style="left:654px;top:236px;width:160px;height:24px;box-sizing:border-box;border:1px solid #8C8C8C;background:#EEEEEE;"></div>
<div class="t" style="left:655.00px;top:242.96px;font-size:12.2px;line-height:13.63px;color:#000;letter-spacing:-0.15px;">LG ELECTRONICS</div>
<svg style="left:794px;top:237px" width="17" height="16" viewBox="0 0 17 16"><use href="#mag"/></svg>
<div class="t" style="left:586.40px;top:270.96px;font-size:12.2px;line-height:13.63px;color:#000;letter-spacing:0.05px;">Bill Contact</div>
<div style="left:654px;top:265px;width:160px;height:24px;box-sizing:border-box;border:1px solid #8C8C8C;background:#EEEEEE;"></div>
<div class="t" style="left:655.00px;top:271.96px;font-size:12.2px;line-height:13.63px;color:#000;letter-spacing:-0.3px;">TOM HIDDLESTON</div>
<svg style="left:794px;top:266px" width="17" height="16" viewBox="0 0 17 16"><use href="#mag"/></svg>
<div class="t" style="left:586.40px;top:299.96px;font-size:12.2px;line-height:13.63px;color:#000;letter-spacing:0.05px;">Language</div>
<div style="left:654px;top:294px;width:90px;height:24px;box-sizing:border-box;border:1px solid #8C8C8C;background:#EEEEEE;"></div>
<svg style="left:724px;top:295px" width="17" height="16" viewBox="0 0 17 16"><use href="#mag"/></svg>
<div class="t" style="left:825.00px;top:248.96px;font-size:12.2px;line-height:13.63px;color:#000;letter-spacing:0.05px;">Document Folder:</div>
<div style="left:826px;top:264px;width:216px;height:49px;box-sizing:border-box;border:2px solid #6E7886;border-right-color:#9AA3AE;border-bottom-color:#9AA3AE;background:#EEEEEE"></div>
<div style="left:1014px;top:240px;width:49px;height:23px;box-sizing:border-box;border:1px solid #BDBDBD;background:#fff"></div>
<div style="left:1024px;top:242px;width:30px;height:20px;box-sizing:border-box;border:1px solid #6E6666;border-radius:2px;background:#fff"></div>
<div class="t" style="left:1024.00px;top:247.25px;font-size:10px;line-height:11.17px;color:#050505;font-weight:bold;width:30px;text-align:center;">Reset</div>
<div style="left:8px;top:356px;width:1172px;height:299px;box-sizing:border-box;border:1px solid #6F93D0;border-right-color:#8494A8;border-bottom-color:#8494A8;background:#C6DBF3"></div>
<div style="left:10px;top:360px;width:1166px;height:291px;box-sizing:border-box;border:1px solid #A6A6A6;background:#fff"></div>
<svg style="left:76px;top:334px" width="59" height="22" viewBox="0 0 59 22"><path d="M0.5 22 L0.5 5.5 L5.5 0.5 L58.5 0.5 L58.5 22" fill="#FF9A4A" stroke="#8A9BB5" stroke-width="1"/><path d="M1.5 22 L1.5 6 L6 1.5 L57.5 1.5" fill="none" stroke="#fff" stroke-width="1" opacity="0.85"/></svg>
<div class="t" style="left:81.00px;top:339.96px;font-size:12.2px;line-height:13.63px;color:#000;letter-spacing:0.05px;">Labor</div>
<svg style="left:10px;top:334px" width="67" height="22" viewBox="0 0 67 22"><path d="M0.5 22 L0.5 5.5 L5.5 0.5 L66.5 0.5 L66.5 22" fill="#C44B2C" stroke="#6A8FD4" stroke-width="1"/><path d="M1.5 22 L1.5 6 L6 1.5 L65.5 1.5" fill="none" stroke="#fff" stroke-width="1"/></svg>
<div class="t" style="left:15.00px;top:340.14px;font-size:12px;line-height:13.40px;color:#fff;font-weight:bold;">Item(s)</div>
<div style="left:11px;top:356px;width:64px;height:3px;background:#C6DBF3"></div>
<div class="t" style="left:44.30px;top:369.96px;font-size:12.2px;line-height:13.63px;color:#000;letter-spacing:0.05px;">Search :</div>
<div class="t" style="left:119.20px;top:369.96px;font-size:12.2px;line-height:13.63px;color:#000;letter-spacing:0.05px;">Asset</div>
<div style="left:162px;top:365px;width:120px;height:24px;box-sizing:border-box;border:1px solid #000;background:#fff;"></div>
<div style="left:164px;top:368px;width:1px;height:17px;background:#000"></div>
<div class="t" style="left:361.00px;top:369.96px;font-size:12.2px;line-height:13.63px;color:#000;letter-spacing:0.05px;">Product</div>
<div style="left:412px;top:365px;width:195px;height:24px;box-sizing:border-box;border:1px solid #000;background:#fff;"></div>
<div class="t" style="left:624.00px;top:369.96px;font-size:12.2px;line-height:13.63px;color:#000;letter-spacing:0.05px;">Qty</div>
<div style="left:647px;top:365px;width:40px;height:24px;box-sizing:border-box;border:1px solid #000;background:#fff;"></div>
<div class="t" style="left:648.00px;top:371.96px;font-size:12.2px;line-height:13.63px;color:#000;letter-spacing:0.05px;">1</div>
<div style="left:707px;top:371px;width:12px;height:12px;box-sizing:border-box;border:1px solid #6F8196;background:linear-gradient(135deg,#FFFFFF 25%,#FBD9BE 55%,#F39A5A);box-shadow:inset 1px 1px 0 #fff"></div>
<div class="t" style="left:723.50px;top:371.96px;font-size:12.2px;line-height:13.63px;color:#000;letter-spacing:0.05px;">Update existing lines</div>
<div style="left:10px;top:393px;width:1166px;height:1px;background:#ABABAB"></div>
<div style="left:10px;top:395px;width:1166px;height:1px;background:#B4B4B4"></div>
<div style="left:12px;top:397px;width:1162px;height:252px;box-sizing:border-box;border:1px solid #7C8796;background:#fff"></div>
<div style="left:13px;top:398px;width:1160px;height:233px;overflow:hidden">
<div style="left:0;top:0;width:1203px;height:20px;background:#FF6B3D"></div>
<div style="left:0px;top:0;width:14px;height:19px;box-sizing:border-box;border:1px solid #8E3B21;background:#C44B2C;box-shadow:inset 1px 1px 0 #FF7545"></div>
<div class="t" style="left:0px;top:5.19px;width:15px;text-align:center;font-size:12.2px;line-height:13.96px;color:#fff;white-space:nowrap;overflow:hidden">T</div>
<div style="left:15px;top:0;width:14px;height:19px;box-sizing:border-box;border:1px solid #8E3B21;background:#C44B2C;box-shadow:inset 1px 1px 0 #FF7545"></div>
<div class="t" style="left:15px;top:5.19px;width:15px;text-align:center;font-size:12.2px;line-height:13.96px;color:#fff;white-space:nowrap;overflow:hidden">C</div>
<div style="left:30px;top:0;width:14px;height:19px;box-sizing:border-box;border:1px solid #8E3B21;background:#C44B2C;box-shadow:inset 1px 1px 0 #FF7545"></div>
<div class="t" style="left:30px;top:5.19px;width:15px;text-align:center;font-size:12.2px;line-height:13.96px;color:#fff;white-space:nowrap;overflow:hidden">X</div>
<div style="left:45px;top:0;width:14px;height:19px;box-sizing:border-box;border:1px solid #8E3B21;background:#C44B2C;box-shadow:inset 1px 1px 0 #FF7545"></div>
<div class="t" style="left:45px;top:5.19px;width:15px;text-align:center;font-size:12.2px;line-height:13.96px;color:#fff;white-space:nowrap;overflow:hidden">M</div>
<div style="left:60px;top:0;width:14px;height:19px;box-sizing:border-box;border:1px solid #8E3B21;background:#C44B2C;box-shadow:inset 1px 1px 0 #FF7545"></div>
<div class="t" style="left:60px;top:5.19px;width:15px;text-align:center;font-size:12.2px;line-height:13.96px;color:#fff;white-space:nowrap;overflow:hidden">S</div>
<div style="left:75px;top:0;width:19px;height:19px;box-sizing:border-box;border:1px solid #8E3B21;background:#C44B2C;box-shadow:inset 1px 1px 0 #FF7545"></div>
<div class="t" style="left:75px;top:5.19px;width:20px;text-align:center;font-size:12.2px;line-height:13.96px;color:#fff;white-space:nowrap;overflow:hidden">I.C</div>
<div style="left:95px;top:0;width:19px;height:19px;box-sizing:border-box;border:1px solid #8E3B21;background:#C44B2C;box-shadow:inset 1px 1px 0 #FF7545"></div>
<div class="t" style="left:95px;top:5.19px;width:20px;text-align:center;font-size:12.2px;line-height:13.96px;color:#fff;white-space:nowrap;overflow:hidden">I....</div>
<div style="left:115px;top:0;width:19px;height:19px;box-sizing:border-box;border:1px solid #8E3B21;background:#C44B2C;box-shadow:inset 1px 1px 0 #FF7545"></div>
<div class="t" style="left:115px;top:5.19px;width:20px;text-align:center;font-size:12.2px;line-height:13.96px;color:#fff;white-space:nowrap;overflow:hidden">I.I</div>
<div style="left:135px;top:0;width:74px;height:19px;box-sizing:border-box;border:1px solid #8E3B21;background:#C44B2C;box-shadow:inset 1px 1px 0 #FF7545"></div>
<div class="t" style="left:135px;top:5.19px;width:75px;text-align:center;font-size:12.2px;line-height:13.96px;color:#fff;white-space:nowrap;overflow:hidden">Status</div>
<div style="left:210px;top:0;width:19px;height:19px;box-sizing:border-box;border:1px solid #8E3B21;background:#C44B2C;box-shadow:inset 1px 1px 0 #FF7545"></div>
<div class="t" style="left:210px;top:5.19px;width:20px;text-align:center;font-size:12.2px;line-height:13.96px;color:#fff;white-space:nowrap;overflow:hidden">L</div>
<div style="left:230px;top:0;width:44px;height:19px;box-sizing:border-box;border:1px solid #8E3B21;background:#C44B2C;box-shadow:inset 1px 1px 0 #FF7545"></div>
<div class="t" style="left:230px;top:5.19px;width:45px;text-align:center;font-size:12.2px;line-height:13.96px;color:#fff;white-space:nowrap;overflow:hidden">Action</div>
<div style="left:275px;top:0;width:99px;height:19px;box-sizing:border-box;border:1px solid #8E3B21;background:#C44B2C;box-shadow:inset 1px 1px 0 #FF7545"></div>
<div class="t" style="left:275px;top:5.19px;width:100px;text-align:center;font-size:12.2px;line-height:13.96px;color:#fff;white-space:nowrap;overflow:hidden">Product ID</div>
<div style="left:375px;top:0;width:142px;height:19px;box-sizing:border-box;border:1px solid #8E3B21;background:#C44B2C;box-shadow:inset 1px 1px 0 #FF7545"></div>
<div class="t" style="left:375px;top:5.19px;width:143px;text-align:center;font-size:12.2px;line-height:13.96px;color:#fff;white-space:nowrap;overflow:hidden">Description</div>
<div style="left:518px;top:0;width:54px;height:19px;box-sizing:border-box;border:1px solid #8E3B21;background:#C44B2C;box-shadow:inset 1px 1px 0 #FF7545"></div>
<div class="t" style="left:518px;top:5.19px;width:55px;text-align:center;font-size:12.2px;line-height:13.96px;color:#fff;white-space:nowrap;overflow:hidden">Duration</div>
<div style="left:573px;top:0;width:29px;height:19px;box-sizing:border-box;border:1px solid #8E3B21;background:#C44B2C;box-shadow:inset 1px 1px 0 #FF7545"></div>
<div class="t" style="left:573px;top:5.19px;width:30px;text-align:center;font-size:12.2px;line-height:13.96px;color:#fff;white-space:nowrap;overflow:hidden">Qty</div>
<div style="left:603px;top:0;width:39px;height:19px;box-sizing:border-box;border:1px solid #8E3B21;background:#C44B2C;box-shadow:inset 1px 1px 0 #FF7545"></div>
<div class="t" style="left:603px;top:5.19px;width:40px;text-align:center;font-size:12.2px;line-height:13.96px;color:#fff;white-space:nowrap;overflow:hidden">Unit</div>
<div style="left:643px;top:0;width:100px;height:19px;box-sizing:border-box;border:1px solid #8E3B21;background:#C44B2C;box-shadow:inset 1px 1px 0 #FF7545"></div>
<div class="t" style="left:643px;top:5.19px;width:101px;text-align:center;font-size:12.2px;line-height:13.96px;color:#fff;white-space:nowrap;overflow:hidden">Shipping Site</div>
<div style="left:744px;top:0;width:98px;height:19px;box-sizing:border-box;border:1px solid #8E3B21;background:#C44B2C;box-shadow:inset 1px 1px 0 #FF7545"></div>
<div class="t" style="left:744px;top:5.19px;width:99px;text-align:center;font-size:12.2px;line-height:13.96px;color:#fff;white-space:nowrap;overflow:hidden">Returning Site</div>
<div style="left:843px;top:0;width:89px;height:19px;box-sizing:border-box;border:1px solid #8E3B21;background:#C44B2C;box-shadow:inset 1px 1px 0 #FF7545"></div>
<div class="t" style="left:843px;top:5.19px;width:90px;text-align:center;font-size:12.2px;line-height:13.96px;color:#fff;white-space:nowrap;overflow:hidden">Day/Each Price</div>
<div style="left:933px;top:0;width:69px;height:19px;box-sizing:border-box;border:1px solid #8E3B21;background:#C44B2C;box-shadow:inset 1px 1px 0 #FF7545"></div>
<div class="t" style="left:933px;top:5.19px;width:70px;text-align:center;font-size:12.2px;line-height:13.96px;color:#fff;white-space:nowrap;overflow:hidden">Week Price</div>
<div style="left:1003px;top:0;width:69px;height:19px;box-sizing:border-box;border:1px solid #8E3B21;background:#C44B2C;box-shadow:inset 1px 1px 0 #FF7545"></div>
<div class="t" style="left:1003px;top:5.19px;width:70px;text-align:center;font-size:12.2px;line-height:13.96px;color:#fff;white-space:nowrap;overflow:hidden">Month Price</div>
<div style="left:1073px;top:0;width:59px;height:19px;box-sizing:border-box;border:1px solid #8E3B21;background:#C44B2C;box-shadow:inset 1px 1px 0 #FF7545"></div>
<div class="t" style="left:1073px;top:5.19px;width:60px;text-align:center;font-size:12.2px;line-height:13.96px;color:#fff;white-space:nowrap;overflow:hidden">Net Each</div>
<div style="left:1133px;top:0;width:47px;height:19px;box-sizing:border-box;border:1px solid #8E3B21;background:#C44B2C;box-shadow:inset 1px 1px 0 #FF7545"></div>
<div class="t" style="left:1133px;top:5.19px;width:48px;text-align:center;font-size:12.2px;line-height:13.96px;color:#fff;white-space:nowrap;overflow:hidden">Total</div>
<div style="left:0;top:20px;width:1203px;height:19px;background:#FF9A4A"></div>
<div style="left:0;top:38px;width:1203px;height:1px;background:#B8743E"></div>
<div style="left:14px;top:20px;width:1px;height:19px;background:#B8743E"></div>
<div style="left:29px;top:20px;width:1px;height:19px;background:#B8743E"></div>
<div style="left:44px;top:20px;width:1px;height:19px;background:#B8743E"></div>
<div style="left:59px;top:20px;width:1px;height:19px;background:#B8743E"></div>
<div style="left:74px;top:20px;width:1px;height:19px;background:#B8743E"></div>
<div style="left:94px;top:20px;width:1px;height:19px;background:#B8743E"></div>
<div style="left:114px;top:20px;width:1px;height:19px;background:#B8743E"></div>
<div style="left:134px;top:20px;width:1px;height:19px;background:#B8743E"></div>
<div style="left:209px;top:20px;width:1px;height:19px;background:#B8743E"></div>
<div style="left:229px;top:20px;width:1px;height:19px;background:#B8743E"></div>
<div style="left:274px;top:20px;width:1px;height:19px;background:#B8743E"></div>
<div style="left:374px;top:20px;width:1px;height:19px;background:#B8743E"></div>
<div style="left:517px;top:20px;width:1px;height:19px;background:#B8743E"></div>
<div style="left:572px;top:20px;width:1px;height:19px;background:#B8743E"></div>
<div style="left:602px;top:20px;width:1px;height:19px;background:#B8743E"></div>
<div style="left:642px;top:20px;width:1px;height:19px;background:#B8743E"></div>
<div style="left:743px;top:20px;width:1px;height:19px;background:#B8743E"></div>
<div style="left:842px;top:20px;width:1px;height:19px;background:#B8743E"></div>
<div style="left:932px;top:20px;width:1px;height:19px;background:#B8743E"></div>
<div style="left:1002px;top:20px;width:1px;height:19px;background:#B8743E"></div>
<div style="left:1072px;top:20px;width:1px;height:19px;background:#B8743E"></div>
<div style="left:1132px;top:20px;width:1px;height:19px;background:#B8743E"></div>
<div style="left:1180px;top:20px;width:1px;height:19px;background:#B8743E"></div>
<div class="t" style="left:135px;top:23.96px;font-size:12.2px;letter-spacing:0px;line-height:13.63px;white-space:nowrap">Reserved</div>
<div class="t" style="left:230px;top:23.96px;font-size:12.2px;letter-spacing:0px;line-height:13.63px;white-space:nowrap">Rent</div>
<div class="t" style="left:275px;top:23.96px;font-size:12.2px;letter-spacing:0px;line-height:13.63px;white-space:nowrap">LG LED</div>
<div class="t" style="left:382px;top:23.96px;font-size:12.2px;letter-spacing:0px;line-height:13.63px;white-space:nowrap">LG LED</div>
<div class="t" style="left:519px;top:23.96px;font-size:12.2px;letter-spacing:0px;line-height:13.63px;white-space:nowrap">5d</div>
<div class="t" style="left:572px;width:29px;text-align:right;top:23.96px;font-size:12.2px;line-height:13.63px;white-space:nowrap">1</div>
<div class="t" style="left:603px;top:23.96px;font-size:12.2px;letter-spacing:0px;line-height:13.63px;white-space:nowrap">Day</div>
<div class="t" style="left:644px;top:23.96px;font-size:12.2px;letter-spacing:-0.4px;line-height:13.63px;white-space:nowrap">MUNICH</div>
<div class="t" style="left:744px;top:23.96px;font-size:12.2px;letter-spacing:-0.3px;line-height:13.63px;white-space:nowrap">COLOGNE</div>
<div class="t" style="left:842px;width:88px;text-align:right;top:23.96px;font-size:12.2px;line-height:13.63px;white-space:nowrap">0.00</div>
<div class="t" style="left:932px;width:68px;text-align:right;top:23.96px;font-size:12.2px;line-height:13.63px;white-space:nowrap">0.00</div>
<div class="t" style="left:1002px;width:68px;text-align:right;top:23.96px;font-size:12.2px;line-height:13.63px;white-space:nowrap">0.00</div>
<div class="t" style="left:1072px;width:58px;text-align:right;top:23.96px;font-size:12.2px;line-height:13.63px;white-space:nowrap">0.00</div>
<div style="left:0;top:39px;width:1203px;height:19px;background:#FF9A4A"></div>
<div style="left:0;top:57px;width:1203px;height:1px;background:#B8743E"></div>
<div style="left:14px;top:39px;width:1px;height:19px;background:#B8743E"></div>
<div style="left:29px;top:39px;width:1px;height:19px;background:#B8743E"></div>
<div style="left:44px;top:39px;width:1px;height:19px;background:#B8743E"></div>
<div style="left:59px;top:39px;width:1px;height:19px;background:#B8743E"></div>
<div style="left:74px;top:39px;width:1px;height:19px;background:#B8743E"></div>
<div style="left:94px;top:39px;width:1px;height:19px;background:#B8743E"></div>
<div style="left:114px;top:39px;width:1px;height:19px;background:#B8743E"></div>
<div style="left:134px;top:39px;width:1px;height:19px;background:#B8743E"></div>
<div style="left:209px;top:39px;width:1px;height:19px;background:#B8743E"></div>
<div style="left:229px;top:39px;width:1px;height:19px;background:#B8743E"></div>
<div style="left:274px;top:39px;width:1px;height:19px;background:#B8743E"></div>
<div style="left:374px;top:39px;width:1px;height:19px;background:#B8743E"></div>
<div style="left:517px;top:39px;width:1px;height:19px;background:#B8743E"></div>
<div style="left:572px;top:39px;width:1px;height:19px;background:#B8743E"></div>
<div style="left:602px;top:39px;width:1px;height:19px;background:#B8743E"></div>
<div style="left:642px;top:39px;width:1px;height:19px;background:#B8743E"></div>
<div style="left:743px;top:39px;width:1px;height:19px;background:#B8743E"></div>
<div style="left:842px;top:39px;width:1px;height:19px;background:#B8743E"></div>
<div style="left:932px;top:39px;width:1px;height:19px;background:#B8743E"></div>
<div style="left:1002px;top:39px;width:1px;height:19px;background:#B8743E"></div>
<div style="left:1072px;top:39px;width:1px;height:19px;background:#B8743E"></div>
<div style="left:1132px;top:39px;width:1px;height:19px;background:#B8743E"></div>
<div style="left:1180px;top:39px;width:1px;height:19px;background:#B8743E"></div>
<div class="t" style="left:135px;top:42.96px;font-size:12.2px;letter-spacing:0px;line-height:13.63px;white-space:nowrap">Reserved</div>
<div class="t" style="left:230px;top:42.96px;font-size:12.2px;letter-spacing:0px;line-height:13.63px;white-space:nowrap">Rent</div>
<div class="t" style="left:275px;top:42.96px;font-size:12.2px;letter-spacing:0px;line-height:13.63px;white-space:nowrap">LG LED</div>
<div class="t" style="left:382px;top:42.96px;font-size:12.2px;letter-spacing:0px;line-height:13.63px;white-space:nowrap">LG LED</div>
<div class="t" style="left:519px;top:42.96px;font-size:12.2px;letter-spacing:0px;line-height:13.63px;white-space:nowrap">5d</div>
<div class="t" style="left:572px;width:29px;text-align:right;top:42.96px;font-size:12.2px;line-height:13.63px;white-space:nowrap">1</div>
<div class="t" style="left:603px;top:42.96px;font-size:12.2px;letter-spacing:0px;line-height:13.63px;white-space:nowrap">Day</div>
<div class="t" style="left:644px;top:42.96px;font-size:12.2px;letter-spacing:-0.4px;line-height:13.63px;white-space:nowrap">MUNICH</div>
<div class="t" style="left:744px;top:42.96px;font-size:12.2px;letter-spacing:-0.3px;line-height:13.63px;white-space:nowrap">PARIS</div>
<div class="t" style="left:842px;width:88px;text-align:right;top:42.96px;font-size:12.2px;line-height:13.63px;white-space:nowrap">0.00</div>
<div class="t" style="left:932px;width:68px;text-align:right;top:42.96px;font-size:12.2px;line-height:13.63px;white-space:nowrap">0.00</div>
<div class="t" style="left:1002px;width:68px;text-align:right;top:42.96px;font-size:12.2px;line-height:13.63px;white-space:nowrap">0.00</div>
<div class="t" style="left:1072px;width:58px;text-align:right;top:42.96px;font-size:12.2px;line-height:13.63px;white-space:nowrap">0.00</div>
<div style="left:0;top:58px;width:1203px;height:19px;background:#FF9A4A"></div>
<div style="left:0;top:76px;width:1203px;height:1px;background:#B8743E"></div>
<div style="left:14px;top:58px;width:1px;height:19px;background:#B8743E"></div>
<div style="left:29px;top:58px;width:1px;height:19px;background:#B8743E"></div>
<div style="left:44px;top:58px;width:1px;height:19px;background:#B8743E"></div>
<div style="left:59px;top:58px;width:1px;height:19px;background:#B8743E"></div>
<div style="left:74px;top:58px;width:1px;height:19px;background:#B8743E"></div>
<div style="left:94px;top:58px;width:1px;height:19px;background:#B8743E"></div>
<div style="left:114px;top:58px;width:1px;height:19px;background:#B8743E"></div>
<div style="left:134px;top:58px;width:1px;height:19px;background:#B8743E"></div>
<div style="left:209px;top:58px;width:1px;height:19px;background:#B8743E"></div>
<div style="left:229px;top:58px;width:1px;height:19px;background:#B8743E"></div>
<div style="left:274px;top:58px;width:1px;height:19px;background:#B8743E"></div>
<div style="left:374px;top:58px;width:1px;height:19px;background:#B8743E"></div>
<div style="left:517px;top:58px;width:1px;height:19px;background:#B8743E"></div>
<div style="left:572px;top:58px;width:1px;height:19px;background:#B8743E"></div>
<div style="left:602px;top:58px;width:1px;height:19px;background:#B8743E"></div>
<div style="left:642px;top:58px;width:1px;height:19px;background:#B8743E"></div>
<div style="left:743px;top:58px;width:1px;height:19px;background:#B8743E"></div>
<div style="left:842px;top:58px;width:1px;height:19px;background:#B8743E"></div>
<div style="left:932px;top:58px;width:1px;height:19px;background:#B8743E"></div>
<div style="left:1002px;top:58px;width:1px;height:19px;background:#B8743E"></div>
<div style="left:1072px;top:58px;width:1px;height:19px;background:#B8743E"></div>
<div style="left:1132px;top:58px;width:1px;height:19px;background:#B8743E"></div>
<div style="left:1180px;top:58px;width:1px;height:19px;background:#B8743E"></div>
<div class="t" style="left:135px;top:61.96px;font-size:12.2px;letter-spacing:0px;line-height:13.63px;white-space:nowrap">Reserved</div>
<div class="t" style="left:230px;top:61.96px;font-size:12.2px;letter-spacing:0px;line-height:13.63px;white-space:nowrap">Rent</div>
<div class="t" style="left:275px;top:61.96px;font-size:12.2px;letter-spacing:0px;line-height:13.63px;white-space:nowrap">LG LED</div>
<div class="t" style="left:382px;top:61.96px;font-size:12.2px;letter-spacing:0px;line-height:13.63px;white-space:nowrap">LG LED</div>
<div class="t" style="left:519px;top:61.96px;font-size:12.2px;letter-spacing:0px;line-height:13.63px;white-space:nowrap">5d</div>
<div class="t" style="left:572px;width:29px;text-align:right;top:61.96px;font-size:12.2px;line-height:13.63px;white-space:nowrap">1</div>
<div class="t" style="left:603px;top:61.96px;font-size:12.2px;letter-spacing:0px;line-height:13.63px;white-space:nowrap">Day</div>
<div class="t" style="left:644px;top:61.96px;font-size:12.2px;letter-spacing:-0.4px;line-height:13.63px;white-space:nowrap">MUNICH</div>
<div class="t" style="left:744px;top:61.96px;font-size:12.2px;letter-spacing:-0.3px;line-height:13.63px;white-space:nowrap">PARIS</div>
<div class="t" style="left:842px;width:88px;text-align:right;top:61.96px;font-size:12.2px;line-height:13.63px;white-space:nowrap">0.00</div>
<div class="t" style="left:932px;width:68px;text-align:right;top:61.96px;font-size:12.2px;line-height:13.63px;white-space:nowrap">0.00</div>
<div class="t" style="left:1002px;width:68px;text-align:right;top:61.96px;font-size:12.2px;line-height:13.63px;white-space:nowrap">0.00</div>
<div class="t" style="left:1072px;width:58px;text-align:right;top:61.96px;font-size:12.2px;line-height:13.63px;white-space:nowrap">0.00</div>
<div style="left:0;top:77px;width:1203px;height:19px;background:#FF9A4A"></div>
<div style="left:0;top:95px;width:1203px;height:1px;background:#B8743E"></div>
<div style="left:14px;top:77px;width:1px;height:19px;background:#B8743E"></div>
<div style="left:29px;top:77px;width:1px;height:19px;background:#B8743E"></div>
<div style="left:44px;top:77px;width:1px;height:19px;background:#B8743E"></div>
<div style="left:59px;top:77px;width:1px;height:19px;background:#B8743E"></div>
<div style="left:74px;top:77px;width:1px;height:19px;background:#B8743E"></div>
<div style="left:94px;top:77px;width:1px;height:19px;background:#B8743E"></div>
<div style="left:114px;top:77px;width:1px;height:19px;background:#B8743E"></div>
<div style="left:134px;top:77px;width:1px;height:19px;background:#B8743E"></div>
<div style="left:209px;top:77px;width:1px;height:19px;background:#B8743E"></div>
<div style="left:229px;top:77px;width:1px;height:19px;background:#B8743E"></div>
<div style="left:274px;top:77px;width:1px;height:19px;background:#B8743E"></div>
<div style="left:374px;top:77px;width:1px;height:19px;background:#B8743E"></div>
<div style="left:517px;top:77px;width:1px;height:19px;background:#B8743E"></div>
<div style="left:572px;top:77px;width:1px;height:19px;background:#B8743E"></div>
<div style="left:602px;top:77px;width:1px;height:19px;background:#B8743E"></div>
<div style="left:642px;top:77px;width:1px;height:19px;background:#B8743E"></div>
<div style="left:743px;top:77px;width:1px;height:19px;background:#B8743E"></div>
<div style="left:842px;top:77px;width:1px;height:19px;background:#B8743E"></div>
<div style="left:932px;top:77px;width:1px;height:19px;background:#B8743E"></div>
<div style="left:1002px;top:77px;width:1px;height:19px;background:#B8743E"></div>
<div style="left:1072px;top:77px;width:1px;height:19px;background:#B8743E"></div>
<div style="left:1132px;top:77px;width:1px;height:19px;background:#B8743E"></div>
<div style="left:1180px;top:77px;width:1px;height:19px;background:#B8743E"></div>
<div class="t" style="left:135px;top:80.96px;font-size:12.2px;letter-spacing:0px;line-height:13.63px;white-space:nowrap">Reserved</div>
<div class="t" style="left:230px;top:80.96px;font-size:12.2px;letter-spacing:0px;line-height:13.63px;white-space:nowrap">Rent</div>
<div class="t" style="left:275px;top:80.96px;font-size:12.2px;letter-spacing:0px;line-height:13.63px;white-space:nowrap">LG LED</div>
<div class="t" style="left:382px;top:80.96px;font-size:12.2px;letter-spacing:0px;line-height:13.63px;white-space:nowrap">LG LED</div>
<div class="t" style="left:519px;top:80.96px;font-size:12.2px;letter-spacing:0px;line-height:13.63px;white-space:nowrap">5d</div>
<div class="t" style="left:572px;width:29px;text-align:right;top:80.96px;font-size:12.2px;line-height:13.63px;white-space:nowrap">1</div>
<div class="t" style="left:603px;top:80.96px;font-size:12.2px;letter-spacing:0px;line-height:13.63px;white-space:nowrap">Day</div>
<div class="t" style="left:644px;top:80.96px;font-size:12.2px;letter-spacing:-0.4px;line-height:13.63px;white-space:nowrap">MUNICH</div>
<div class="t" style="left:744px;top:80.96px;font-size:12.2px;letter-spacing:-0.3px;line-height:13.63px;white-space:nowrap">PARIS</div>
<div class="t" style="left:842px;width:88px;text-align:right;top:80.96px;font-size:12.2px;line-height:13.63px;white-space:nowrap">0.00</div>
<div class="t" style="left:932px;width:68px;text-align:right;top:80.96px;font-size:12.2px;line-height:13.63px;white-space:nowrap">0.00</div>
<div class="t" style="left:1002px;width:68px;text-align:right;top:80.96px;font-size:12.2px;line-height:13.63px;white-space:nowrap">0.00</div>
<div class="t" style="left:1072px;width:58px;text-align:right;top:80.96px;font-size:12.2px;line-height:13.63px;white-space:nowrap">0.00</div>
<div style="left:0;top:96px;width:1203px;height:19px;background:#FF9A4A"></div>
<div style="left:0;top:114px;width:1203px;height:1px;background:#B8743E"></div>
<div style="left:14px;top:96px;width:1px;height:19px;background:#B8743E"></div>
<div style="left:29px;top:96px;width:1px;height:19px;background:#B8743E"></div>
<div style="left:44px;top:96px;width:1px;height:19px;background:#B8743E"></div>
<div style="left:59px;top:96px;width:1px;height:19px;background:#B8743E"></div>
<div style="left:74px;top:96px;width:1px;height:19px;background:#B8743E"></div>
<div style="left:94px;top:96px;width:1px;height:19px;background:#B8743E"></div>
<div style="left:114px;top:96px;width:1px;height:19px;background:#B8743E"></div>
<div style="left:134px;top:96px;width:1px;height:19px;background:#B8743E"></div>
<div style="left:209px;top:96px;width:1px;height:19px;background:#B8743E"></div>
<div style="left:229px;top:96px;width:1px;height:19px;background:#B8743E"></div>
<div style="left:274px;top:96px;width:1px;height:19px;background:#B8743E"></div>
<div style="left:374px;top:96px;width:1px;height:19px;background:#B8743E"></div>
<div style="left:517px;top:96px;width:1px;height:19px;background:#B8743E"></div>
<div style="left:572px;top:96px;width:1px;height:19px;background:#B8743E"></div>
<div style="left:602px;top:96px;width:1px;height:19px;background:#B8743E"></div>
<div style="left:642px;top:96px;width:1px;height:19px;background:#B8743E"></div>
<div style="left:743px;top:96px;width:1px;height:19px;background:#B8743E"></div>
<div style="left:842px;top:96px;width:1px;height:19px;background:#B8743E"></div>
<div style="left:932px;top:96px;width:1px;height:19px;background:#B8743E"></div>
<div style="left:1002px;top:96px;width:1px;height:19px;background:#B8743E"></div>
<div style="left:1072px;top:96px;width:1px;height:19px;background:#B8743E"></div>
<div style="left:1132px;top:96px;width:1px;height:19px;background:#B8743E"></div>
<div style="left:1180px;top:96px;width:1px;height:19px;background:#B8743E"></div>
<div class="t" style="left:135px;top:99.96px;font-size:12.2px;letter-spacing:0px;line-height:13.63px;white-space:nowrap">Reserved</div>
<div class="t" style="left:230px;top:99.96px;font-size:12.2px;letter-spacing:0px;line-height:13.63px;white-space:nowrap">Rent</div>
<div class="t" style="left:275px;top:99.96px;font-size:12.2px;letter-spacing:0px;line-height:13.63px;white-space:nowrap">LG LED</div>
<div class="t" style="left:382px;top:99.96px;font-size:12.2px;letter-spacing:0px;line-height:13.63px;white-space:nowrap">LG LED</div>
<div class="t" style="left:519px;top:99.96px;font-size:12.2px;letter-spacing:0px;line-height:13.63px;white-space:nowrap">5d</div>
<div class="t" style="left:572px;width:29px;text-align:right;top:99.96px;font-size:12.2px;line-height:13.63px;white-space:nowrap">1</div>
<div class="t" style="left:603px;top:99.96px;font-size:12.2px;letter-spacing:0px;line-height:13.63px;white-space:nowrap">Day</div>
<div class="t" style="left:644px;top:99.96px;font-size:12.2px;letter-spacing:-0.4px;line-height:13.63px;white-space:nowrap">MUNICH</div>
<div class="t" style="left:744px;top:99.96px;font-size:12.2px;letter-spacing:-0.3px;line-height:13.63px;white-space:nowrap">PARIS</div>
<div class="t" style="left:842px;width:88px;text-align:right;top:99.96px;font-size:12.2px;line-height:13.63px;white-space:nowrap">0.00</div>
<div class="t" style="left:932px;width:68px;text-align:right;top:99.96px;font-size:12.2px;line-height:13.63px;white-space:nowrap">0.00</div>
<div class="t" style="left:1002px;width:68px;text-align:right;top:99.96px;font-size:12.2px;line-height:13.63px;white-space:nowrap">0.00</div>
<div class="t" style="left:1072px;width:58px;text-align:right;top:99.96px;font-size:12.2px;line-height:13.63px;white-space:nowrap">0.00</div>
</div>
<div style="left:13px;top:421px;width:13px;height:13px;box-sizing:border-box;border:1px solid #fff;background:#fff"></div>
<div style="left:14px;top:422px;width:11px;height:11px;box-sizing:border-box;border:1px solid #6F7F91;background:linear-gradient(135deg,#FDE3CF,#F58B3F)"></div>
<svg style="left:13px;top:421px" width="13" height="13" viewBox="0 0 13 13"><path d="M3.9 5 V9.2 L9.6 3.3" fill="none" stroke="#151515" stroke-width="1.7" stroke-linejoin="bevel"/></svg>
<div style="left:28px;top:421px;width:13px;height:13px;box-sizing:border-box;border:1px solid #fff;background:#fff"></div>
<div style="left:29px;top:422px;width:11px;height:11px;box-sizing:border-box;border:1px solid #6F7F91;background:linear-gradient(135deg,#FDE3CF,#F58B3F)"></div>
<svg style="left:28px;top:421px" width="13" height="13" viewBox="0 0 13 13"><path d="M3.9 5 V9.2 L9.6 3.3" fill="none" stroke="#151515" stroke-width="1.7" stroke-linejoin="bevel"/></svg>
<div style="left:43px;top:421px;width:13px;height:13px;box-sizing:border-box;border:1px solid #fff;background:#fff"></div>
<div style="left:44px;top:422px;width:11px;height:11px;box-sizing:border-box;border:1px solid #6F7F91;background:linear-gradient(135deg,#FDE3CF,#F58B3F)"></div>
<div style="left:58px;top:421px;width:13px;height:13px;box-sizing:border-box;border:1px solid #fff;background:#fff"></div>
<div style="left:59px;top:422px;width:11px;height:11px;box-sizing:border-box;border:1px solid #6F7F91;background:linear-gradient(135deg,#FDE3CF,#F58B3F)"></div>
<div style="left:73px;top:421px;width:13px;height:13px;box-sizing:border-box;border:1px solid #fff;background:#fff"></div>
<div style="left:74px;top:422px;width:11px;height:11px;box-sizing:border-box;border:1px solid #6F7F91;background:linear-gradient(135deg,#FDE3CF,#F58B3F)"></div>
<div style="left:91px;top:421px;width:13px;height:13px;box-sizing:border-box;border:1px solid #fff;background:#fff"></div>
<div style="left:92px;top:422px;width:11px;height:11px;box-sizing:border-box;border:1px solid #6F7F91;background:linear-gradient(135deg,#FDE3CF,#F58B3F)"></div>
<div style="left:111px;top:421px;width:13px;height:13px;box-sizing:border-box;border:1px solid #fff;background:#fff"></div>
<div style="left:112px;top:422px;width:11px;height:11px;box-sizing:border-box;border:1px solid #6F7F91;background:linear-gradient(135deg,#FDE3CF,#F58B3F)"></div>
<div style="left:131px;top:421px;width:13px;height:13px;box-sizing:border-box;border:1px solid #fff;background:#fff"></div>
<div style="left:132px;top:422px;width:11px;height:11px;box-sizing:border-box;border:1px solid #6F7F91;background:linear-gradient(135deg,#FDE3CF,#F58B3F)"></div>
<div style="left:226px;top:421px;width:13px;height:13px;box-sizing:border-box;border:1px solid #fff;background:#fff"></div>
<div style="left:227px;top:422px;width:11px;height:11px;box-sizing:border-box;border:1px solid #6F7F91;background:linear-gradient(135deg,#FDE3CF,#F58B3F)"></div>
<div style="left:13px;top:440px;width:13px;height:13px;box-sizing:border-box;border:1px solid #fff;background:#fff"></div>
<div style="left:14px;top:441px;width:11px;height:11px;box-sizing:border-box;border:1px solid #6F7F91;background:linear-gradient(135deg,#FDE3CF,#F58B3F)"></div>
<svg style="left:13px;top:440px" width="13" height="13" viewBox="0 0 13 13"><path d="M3.9 5 V9.2 L9.6 3.3" fill="none" stroke="#151515" stroke-width="1.7" stroke-linejoin="bevel"/></svg>
<div style="left:28px;top:440px;width:13px;height:13px;box-sizing:border-box;border:1px solid #fff;background:#fff"></div>
<div style="left:29px;top:441px;width:11px;height:11px;box-sizing:border-box;border:1px solid #6F7F91;background:linear-gradient(135deg,#FDE3CF,#F58B3F)"></div>
<svg style="left:28px;top:440px" width="13" height="13" viewBox="0 0 13 13"><path d="M3.9 5 V9.2 L9.6 3.3" fill="none" stroke="#151515" stroke-width="1.7" stroke-linejoin="bevel"/></svg>
<div style="left:43px;top:440px;width:13px;height:13px;box-sizing:border-box;border:1px solid #fff;background:#fff"></div>
<div style="left:44px;top:441px;width:11px;height:11px;box-sizing:border-box;border:1px solid #6F7F91;background:linear-gradient(135deg,#FDE3CF,#F58B3F)"></div>
<div style="left:58px;top:440px;width:13px;height:13px;box-sizing:border-box;border:1px solid #fff;background:#fff"></div>
<div style="left:59px;top:441px;width:11px;height:11px;box-sizing:border-box;border:1px solid #6F7F91;background:linear-gradient(135deg,#FDE3CF,#F58B3F)"></div>
<div style="left:73px;top:440px;width:13px;height:13px;box-sizing:border-box;border:1px solid #fff;background:#fff"></div>
<div style="left:74px;top:441px;width:11px;height:11px;box-sizing:border-box;border:1px solid #6F7F91;background:linear-gradient(135deg,#FDE3CF,#F58B3F)"></div>
<div style="left:91px;top:440px;width:13px;height:13px;box-sizing:border-box;border:1px solid #fff;background:#fff"></div>
<div style="left:92px;top:441px;width:11px;height:11px;box-sizing:border-box;border:1px solid #6F7F91;background:linear-gradient(135deg,#FDE3CF,#F58B3F)"></div>
<div style="left:111px;top:440px;width:13px;height:13px;box-sizing:border-box;border:1px solid #fff;background:#fff"></div>
<div style="left:112px;top:441px;width:11px;height:11px;box-sizing:border-box;border:1px solid #6F7F91;background:linear-gradient(135deg,#FDE3CF,#F58B3F)"></div>
<div style="left:131px;top:440px;width:13px;height:13px;box-sizing:border-box;border:1px solid #fff;background:#fff"></div>
<div style="left:132px;top:441px;width:11px;height:11px;box-sizing:border-box;border:1px solid #6F7F91;background:linear-gradient(135deg,#FDE3CF,#F58B3F)"></div>
<div style="left:226px;top:440px;width:13px;height:13px;box-sizing:border-box;border:1px solid #fff;background:#fff"></div>
<div style="left:227px;top:441px;width:11px;height:11px;box-sizing:border-box;border:1px solid #6F7F91;background:linear-gradient(135deg,#FDE3CF,#F58B3F)"></div>
<div style="left:13px;top:459px;width:13px;height:13px;box-sizing:border-box;border:1px solid #fff;background:#fff"></div>
<div style="left:14px;top:460px;width:11px;height:11px;box-sizing:border-box;border:1px solid #6F7F91;background:linear-gradient(135deg,#FDE3CF,#F58B3F)"></div>
<svg style="left:13px;top:459px" width="13" height="13" viewBox="0 0 13 13"><path d="M3.9 5 V9.2 L9.6 3.3" fill="none" stroke="#151515" stroke-width="1.7" stroke-linejoin="bevel"/></svg>
<div style="left:28px;top:459px;width:13px;height:13px;box-sizing:border-box;border:1px solid #fff;background:#fff"></div>
<div style="left:29px;top:460px;width:11px;height:11px;box-sizing:border-box;border:1px solid #6F7F91;background:linear-gradient(135deg,#FDE3CF,#F58B3F)"></div>
<svg style="left:28px;top:459px" width="13" height="13" viewBox="0 0 13 13"><path d="M3.9 5 V9.2 L9.6 3.3" fill="none" stroke="#151515" stroke-width="1.7" stroke-linejoin="bevel"/></svg>
<div style="left:43px;top:459px;width:13px;height:13px;box-sizing:border-box;border:1px solid #fff;background:#fff"></div>
<div style="left:44px;top:460px;width:11px;height:11px;box-sizing:border-box;border:1px solid #6F7F91;background:linear-gradient(135deg,#FDE3CF,#F58B3F)"></div>
<div style="left:58px;top:459px;width:13px;height:13px;box-sizing:border-box;border:1px solid #fff;background:#fff"></div>
<div style="left:59px;top:460px;width:11px;height:11px;box-sizing:border-box;border:1px solid #6F7F91;background:linear-gradient(135deg,#FDE3CF,#F58B3F)"></div>
<div style="left:73px;top:459px;width:13px;height:13px;box-sizing:border-box;border:1px solid #fff;background:#fff"></div>
<div style="left:74px;top:460px;width:11px;height:11px;box-sizing:border-box;border:1px solid #6F7F91;background:linear-gradient(135deg,#FDE3CF,#F58B3F)"></div>
<div style="left:91px;top:459px;width:13px;height:13px;box-sizing:border-box;border:1px solid #fff;background:#fff"></div>
<div style="left:92px;top:460px;width:11px;height:11px;box-sizing:border-box;border:1px solid #6F7F91;background:linear-gradient(135deg,#FDE3CF,#F58B3F)"></div>
<div style="left:111px;top:459px;width:13px;height:13px;box-sizing:border-box;border:1px solid #fff;background:#fff"></div>
<div style="left:112px;top:460px;width:11px;height:11px;box-sizing:border-box;border:1px solid #6F7F91;background:linear-gradient(135deg,#FDE3CF,#F58B3F)"></div>
<div style="left:131px;top:459px;width:13px;height:13px;box-sizing:border-box;border:1px solid #fff;background:#fff"></div>
<div style="left:132px;top:460px;width:11px;height:11px;box-sizing:border-box;border:1px solid #6F7F91;background:linear-gradient(135deg,#FDE3CF,#F58B3F)"></div>
<div style="left:226px;top:459px;width:13px;height:13px;box-sizing:border-box;border:1px solid #fff;background:#fff"></div>
<div style="left:227px;top:460px;width:11px;height:11px;box-sizing:border-box;border:1px solid #6F7F91;background:linear-gradient(135deg,#FDE3CF,#F58B3F)"></div>
<div style="left:13px;top:478px;width:13px;height:13px;box-sizing:border-box;border:1px solid #fff;background:#fff"></div>
<div style="left:14px;top:479px;width:11px;height:11px;box-sizing:border-box;border:1px solid #6F7F91;background:linear-gradient(135deg,#FDE3CF,#F58B3F)"></div>
<svg style="left:13px;top:478px" width="13" height="13" viewBox="0 0 13 13"><path d="M3.9 5 V9.2 L9.6 3.3" fill="none" stroke="#151515" stroke-width="1.7" stroke-linejoin="bevel"/></svg>
<div style="left:28px;top:478px;width:13px;height:13px;box-sizing:border-box;border:1px solid #fff;background:#fff"></div>
<div style="left:29px;top:479px;width:11px;height:11px;box-sizing:border-box;border:1px solid #6F7F91;background:linear-gradient(135deg,#FDE3CF,#F58B3F)"></div>
<svg style="left:28px;top:478px" width="13" height="13" viewBox="0 0 13 13"><path d="M3.9 5 V9.2 L9.6 3.3" fill="none" stroke="#151515" stroke-width="1.7" stroke-linejoin="bevel"/></svg>
<div style="left:43px;top:478px;width:13px;height:13px;box-sizing:border-box;border:1px solid #fff;background:#fff"></div>
<div style="left:44px;top:479px;width:11px;height:11px;box-sizing:border-box;border:1px solid #6F7F91;background:linear-gradient(135deg,#FDE3CF,#F58B3F)"></div>
<div style="left:58px;top:478px;width:13px;height:13px;box-sizing:border-box;border:1px solid #fff;background:#fff"></div>
<div style="left:59px;top:479px;width:11px;height:11px;box-sizing:border-box;border:1px solid #6F7F91;background:linear-gradient(135deg,#FDE3CF,#F58B3F)"></div>
<div style="left:73px;top:478px;width:13px;height:13px;box-sizing:border-box;border:1px solid #fff;background:#fff"></div>
<div style="left:74px;top:479px;width:11px;height:11px;box-sizing:border-box;border:1px solid #6F7F91;background:linear-gradient(135deg,#FDE3CF,#F58B3F)"></div>
<div style="left:91px;top:478px;width:13px;height:13px;box-sizing:border-box;border:1px solid #fff;background:#fff"></div>
<div style="left:92px;top:479px;width:11px;height:11px;box-sizing:border-box;border:1px solid #6F7F91;background:linear-gradient(135deg,#FDE3CF,#F58B3F)"></div>
<div style="left:111px;top:478px;width:13px;height:13px;box-sizing:border-box;border:1px solid #fff;background:#fff"></div>
<div style="left:112px;top:479px;width:11px;height:11px;box-sizing:border-box;border:1px solid #6F7F91;background:linear-gradient(135deg,#FDE3CF,#F58B3F)"></div>
<div style="left:131px;top:478px;width:13px;height:13px;box-sizing:border-box;border:1px solid #fff;background:#fff"></div>
<div style="left:132px;top:479px;width:11px;height:11px;box-sizing:border-box;border:1px solid #6F7F91;background:linear-gradient(135deg,#FDE3CF,#F58B3F)"></div>
<div style="left:226px;top:478px;width:13px;height:13px;box-sizing:border-box;border:1px solid #fff;background:#fff"></div>
<div style="left:227px;top:479px;width:11px;height:11px;box-sizing:border-box;border:1px solid #6F7F91;background:linear-gradient(135deg,#FDE3CF,#F58B3F)"></div>
<div style="left:13px;top:497px;width:13px;height:13px;box-sizing:border-box;border:1px solid #fff;background:#fff"></div>
<div style="left:14px;top:498px;width:11px;height:11px;box-sizing:border-box;border:1px solid #6F7F91;background:linear-gradient(135deg,#FDE3CF,#F58B3F)"></div>
<svg style="left:13px;top:497px" width="13" height="13" viewBox="0 0 13 13"><path d="M3.9 5 V9.2 L9.6 3.3" fill="none" stroke="#151515" stroke-width="1.7" stroke-linejoin="bevel"/></svg>
<div style="left:28px;top:497px;width:13px;height:13px;box-sizing:border-box;border:1px solid #fff;background:#fff"></div>
<div style="left:29px;top:498px;width:11px;height:11px;box-sizing:border-box;border:1px solid #6F7F91;background:linear-gradient(135deg,#FDE3CF,#F58B3F)"></div>
<svg style="left:28px;top:497px" width="13" height="13" viewBox="0 0 13 13"><path d="M3.9 5 V9.2 L9.6 3.3" fill="none" stroke="#151515" stroke-width="1.7" stroke-linejoin="bevel"/></svg>
<div style="left:43px;top:497px;width:13px;height:13px;box-sizing:border-box;border:1px solid #fff;background:#fff"></div>
<div style="left:44px;top:498px;width:11px;height:11px;box-sizing:border-box;border:1px solid #6F7F91;background:linear-gradient(135deg,#FDE3CF,#F58B3F)"></div>
<div style="left:58px;top:497px;width:13px;height:13px;box-sizing:border-box;border:1px solid #fff;background:#fff"></div>
<div style="left:59px;top:498px;width:11px;height:11px;box-sizing:border-box;border:1px solid #6F7F91;background:linear-gradient(135deg,#FDE3CF,#F58B3F)"></div>
<div style="left:73px;top:497px;width:13px;height:13px;box-sizing:border-box;border:1px solid #fff;background:#fff"></div>
<div style="left:74px;top:498px;width:11px;height:11px;box-sizing:border-box;border:1px solid #6F7F91;background:linear-gradient(135deg,#FDE3CF,#F58B3F)"></div>
<div style="left:91px;top:497px;width:13px;height:13px;box-sizing:border-box;border:1px solid #fff;background:#fff"></div>
<div style="left:92px;top:498px;width:11px;height:11px;box-sizing:border-box;border:1px solid #6F7F91;background:linear-gradient(135deg,#FDE3CF,#F58B3F)"></div>
<div style="left:111px;top:497px;width:13px;height:13px;box-sizing:border-box;border:1px solid #fff;background:#fff"></div>
<div style="left:112px;top:498px;width:11px;height:11px;box-sizing:border-box;border:1px solid #6F7F91;background:linear-gradient(135deg,#FDE3CF,#F58B3F)"></div>
<div style="left:131px;top:497px;width:13px;height:13px;box-sizing:border-box;border:1px solid #fff;background:#fff"></div>
<div style="left:132px;top:498px;width:11px;height:11px;box-sizing:border-box;border:1px solid #6F7F91;background:linear-gradient(135deg,#FDE3CF,#F58B3F)"></div>
<div style="left:226px;top:497px;width:13px;height:13px;box-sizing:border-box;border:1px solid #fff;background:#fff"></div>
<div style="left:227px;top:498px;width:11px;height:11px;box-sizing:border-box;border:1px solid #6F7F91;background:linear-gradient(135deg,#FDE3CF,#F58B3F)"></div>
<div style="left:655px;top:398px;width:101px;height:114px;box-sizing:border-box;border:2px solid #B80F0F"></div>
<div style="left:13px;top:631px;width:1159px;height:16px;background:#EEEEEE;border-top:1px solid #7C8796;border-bottom:1px solid #7C8796;box-sizing:border-box"></div>
<div style="left:14px;top:632px;width:14px;height:14px;background:#EEEEEE;border-top:1px solid #fff;border-left:1px solid #fff;box-sizing:border-box"></div>
<svg style="left:18px;top:635px" width="6" height="10" viewBox="0 0 6 10"><path d="M5 0.5 L5 9.5 L0.8 5 Z" fill="#222"/></svg>
<div style="left:28px;top:631px;width:569px;height:16px;box-sizing:border-box;border:1.5px solid #FFC000;background:linear-gradient(100deg,#F3C6A6,#E9A57C 20%,#E8A278 80%,#E9A57C)"></div>
<svg style="left:309px;top:634px" width="8" height="10" viewBox="0 0 8 10"><path d="M1.5 1 V9 M3.5 1 V9 M5.5 1 V9" stroke="#9A6A50" stroke-width="1"/></svg>
<div style="left:1156px;top:632px;width:16px;height:14px;box-sizing:border-box;border-left:1px solid #7C8796;border-right:1px solid #7C8796;background:#EEEEEE"></div>
<svg style="left:1161px;top:635px" width="6" height="10" viewBox="0 0 6 10"><path d="M0.8 0.5 L0.8 9.5 L5 5 Z" fill="#222"/></svg>
<div class="t" style="left:69.40px;top:663.33px;font-size:14px;line-height:15.64px;color:#222;font-weight:bold;">Items</div>
<div style="left:120px;top:657px;width:100px;height:24px;box-sizing:border-box;border:1px solid #8C8C8C;background:#EEEEEE;"></div>
<div class="t" style="left:234.40px;top:663.33px;font-size:14px;line-height:15.64px;color:#222;font-weight:bold;">Labor</div>
<div style="left:287px;top:657px;width:100px;height:24px;box-sizing:border-box;border:1px solid #8C8C8C;background:#EEEEEE;"></div>
<div class="t" style="left:445.00px;top:663.33px;font-size:14px;line-height:15.64px;color:#222;font-weight:bold;">Sub Total</div>
<div style="left:525px;top:657px;width:100px;height:24px;box-sizing:border-box;border:1px solid #8C8C8C;background:#EEEEEE;"></div>
<div class="t" style="left:635.00px;top:663.33px;font-size:14px;line-height:15.64px;color:#222;font-weight:bold;">Tax</div>
<div style="left:670px;top:657px;width:100px;height:24px;box-sizing:border-box;border:1px solid #8C8C8C;background:#EEEEEE;"></div>
<div style="left:813px;top:657px;width:89px;height:23px;box-sizing:border-box;border:1px solid #BDBDBD;background:#fff"></div>
<div class="t" style="left:812.00px;top:663.33px;font-size:14px;line-height:15.64px;color:#222;font-weight:bold;width:89px;text-align:center;">Total</div>
<div style="left:906px;top:657px;width:100px;height:24px;box-sizing:border-box;border:1px solid #8C8C8C;background:#EEEEEE;"></div>
<div class="t" style="left:907.00px;top:662.33px;font-size:14px;line-height:15.64px;color:#111;font-weight:bold;">0.00</div>
<div style="left:8px;top:691px;width:1172px;height:24px;box-sizing:border-box;border:1px solid #C4C4C4;background:#fff"></div>
<div style="left:9px;top:692px;width:1170px;height:22px;box-sizing:border-box;border-top:1px solid #7E7E7E;border-left:1px solid #7E7E7E"></div>
</body></html>
